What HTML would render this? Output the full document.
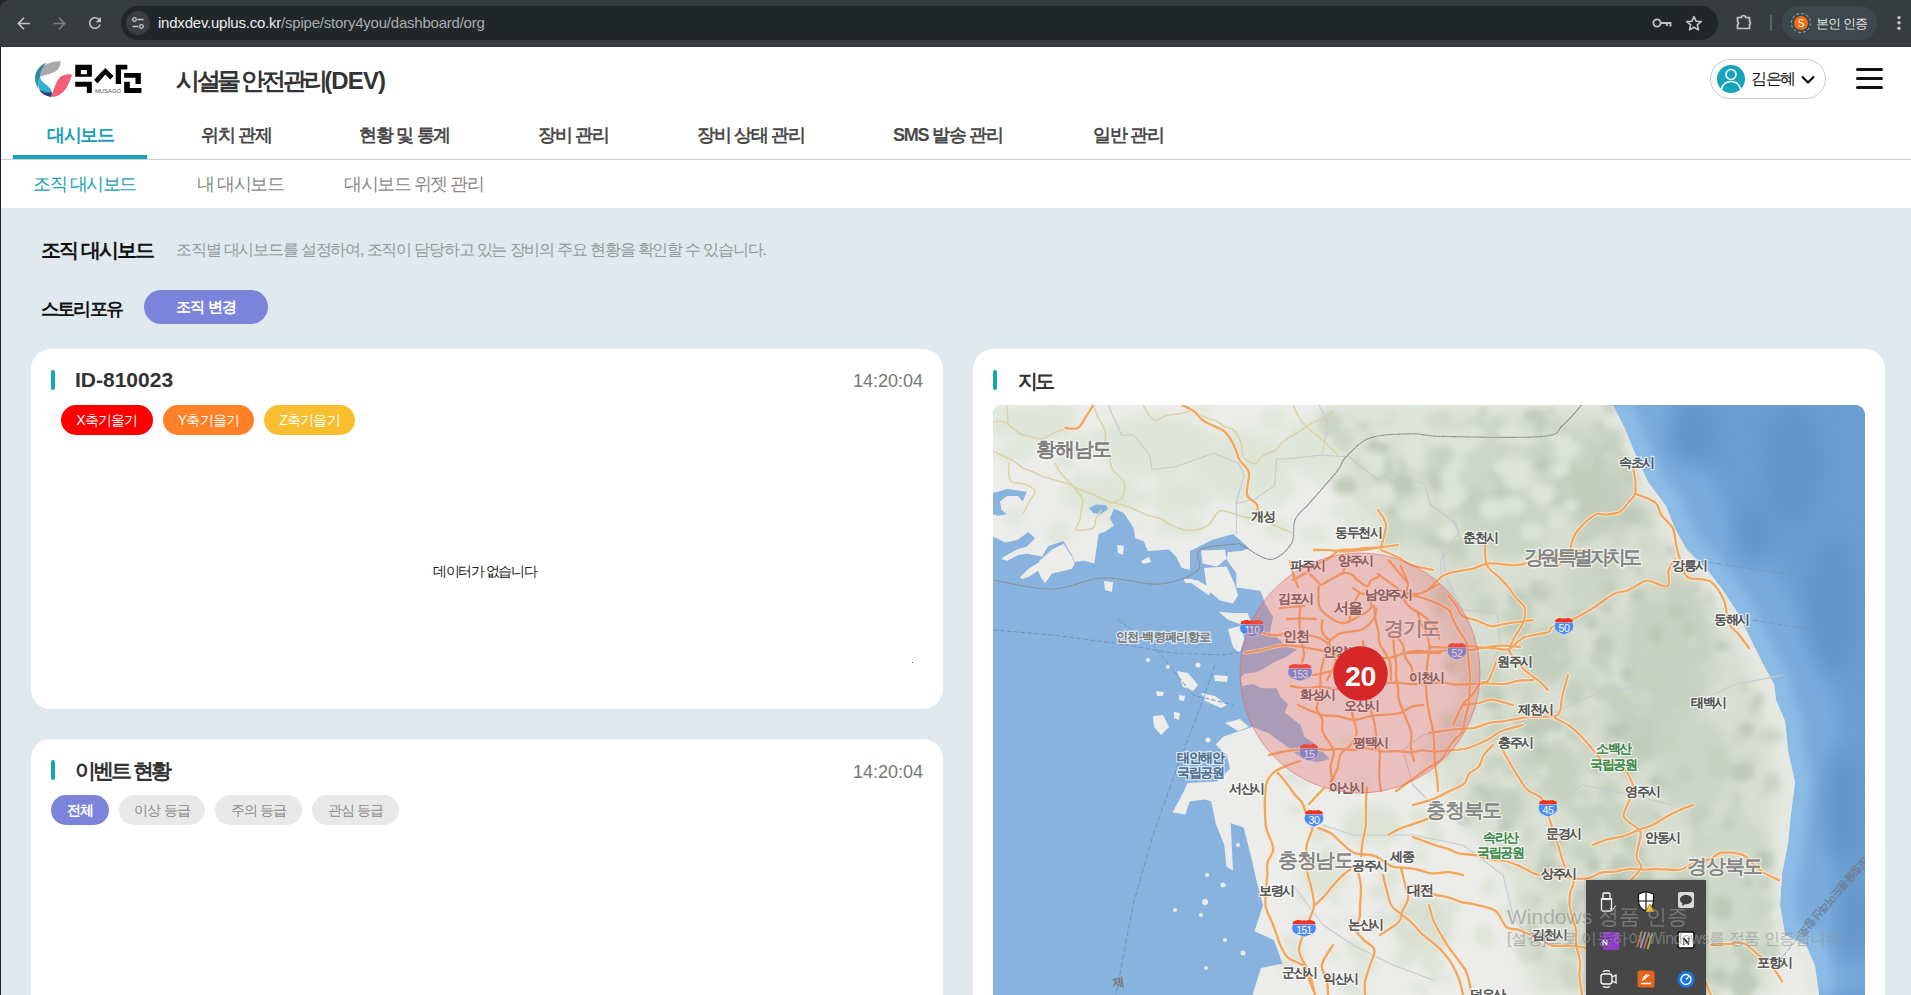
<!DOCTYPE html>
<html lang="ko">
<head>
<meta charset="utf-8">
<title>시설물 안전관리(DEV)</title>
<style>
*{box-sizing:border-box;margin:0;padding:0}
html,body{width:1911px;height:995px;overflow:hidden;background:#fff;font-family:"Liberation Sans",sans-serif;}
.a{position:absolute;white-space:nowrap}
#chrome{position:absolute;left:0;top:0;width:1911px;height:47px;background:#373c3f;border-bottom:1px solid #2e3335}
#omni{position:absolute;left:121px;top:6px;width:1597px;height:34px;border-radius:17px;background:#212628}
#siteinfo{position:absolute;left:126px;top:11px;width:24px;height:24px;border-radius:12px;background:#393e41}
#url{position:absolute;left:158px;top:14px;font-size:15px;color:#a9adb0;letter-spacing:-0.22px}
#prof{position:absolute;left:1782px;top:6px;width:95px;height:34px;border-radius:17px;background:#3c484b}
#leftline{position:absolute;left:0;top:47px;width:1px;height:948px;background:#1c2428}
#content{position:absolute;left:1px;top:208px;width:1910px;height:787px;background:#dfe9ee}
.tab{position:absolute;top:123px;font-size:18px;font-weight:700;color:#4a4a4a;letter-spacing:-1.3px}
.sub{position:absolute;top:172px;font-size:18px;color:#888;letter-spacing:-1.5px}
.card{position:absolute;background:#fff;border-radius:20px}
.bar{position:absolute;width:4px;height:20px;border-radius:2px;background:#14a3b9}
.ctitle{position:absolute;font-size:21px;font-weight:700;color:#333}
.time{position:absolute;font-size:18px;color:#777}
.chip{position:absolute;height:30px;border-radius:15px;color:#fff;font-size:14px;line-height:30px;text-align:center;letter-spacing:-0.8px}
.gchip{position:absolute;height:30px;border-radius:15px;background:#e9e9e9;color:#8a8a8a;font-size:14px;line-height:30px;text-align:center;letter-spacing:-0.8px}
</style>
</head>
<body>
<!-- browser chrome -->
<div id="chrome"></div>
<div class="a" style="left:0;top:0;width:12px;height:12px;background:#222527"></div>
<div class="a" style="left:0;top:0;width:24px;height:24px;background:#373c3f;border-top-left-radius:9px"></div>
<svg class="a" style="left:13.5px;top:13.5px" width="19" height="19" viewBox="0 0 24 24"><path d="M20 11H7.83l5.59-5.59L12 4l-8 8 8 8 1.41-1.41L7.83 13H20v-2z" fill="#c4c7c5"/></svg>
<svg class="a" style="left:49.5px;top:13.5px" width="19" height="19" viewBox="0 0 24 24"><path d="M4 11h12.17l-5.59-5.59L12 4l8 8-8 8-1.41-1.41L16.17 13H4v-2z" fill="#7b7f82"/></svg>
<svg class="a" style="left:86px;top:14px" width="18" height="18" viewBox="0 0 24 24"><path d="M17.65 6.35A7.958 7.958 0 0 0 12 4c-4.42 0-7.99 3.58-7.99 8s3.57 8 7.99 8c3.73 0 6.84-2.55 7.73-6h-2.08A5.99 5.99 0 0 1 12 18c-3.31 0-6-2.69-6-6s2.69-6 6-6c1.66 0 3.14.69 4.22 1.78L13 11h7V4l-2.35 2.35z" fill="#c4c7c5"/></svg>
<div id="omni"></div>
<div id="siteinfo"></div>
<svg class="a" style="left:131px;top:16px" width="14" height="14" viewBox="0 0 14 14"><circle cx="3.5" cy="3.5" r="1.8" stroke="#c4c7c5" stroke-width="1.3" fill="none"/><path d="M6.5 3.5H12.5M1.5 10.5H7.5" stroke="#c4c7c5" stroke-width="1.4"/><circle cx="10.5" cy="10.5" r="1.8" stroke="#c4c7c5" stroke-width="1.3" fill="none"/></svg>
<div id="url"><span style="color:#eceef0">indxdev.uplus.co.kr</span>/spipe/story4you/dashboard/org</div>
<svg class="a" style="left:1652px;top:17px" width="20" height="12" viewBox="0 0 20 12"><circle cx="5" cy="6" r="3.6" stroke="#c4c7c5" stroke-width="1.8" fill="none"/><path d="M8.5 6H18.5V9.5M15 6V9" stroke="#c4c7c5" stroke-width="1.8" fill="none"/></svg>
<svg class="a" style="left:1685px;top:15px" width="18" height="17" viewBox="0 0 18 17"><path d="M9 1.5L11.1 6.2L16.2 6.6L12.3 9.9L13.5 14.9L9 12.2L4.5 14.9L5.7 9.9L1.8 6.6L6.9 6.2Z" stroke="#c4c7c5" stroke-width="1.6" fill="none" stroke-linejoin="round"/></svg>
<svg class="a" style="left:1735px;top:13px" width="20" height="19" viewBox="0 0 20 19"><path d="M2.5 4.5H6.5A2 2 0 0 1 10.5 4.5H14.5V8.5A1.6 1.6 0 0 1 14.5 11.5V15.5H2.5V11.5A1.6 1.6 0 0 0 2.5 8.5Z" stroke="#c4c7c5" stroke-width="1.7" fill="none" stroke-linejoin="round"/></svg>
<div class="a" style="left:1770px;top:15px;width:2px;height:16px;background:#5b6063"></div>
<div id="prof"></div>
<svg class="a" style="left:1790px;top:12px" width="22" height="22" viewBox="0 0 22 22"><circle cx="11" cy="11" r="9.6" stroke="#8a9396" stroke-width="1.1" stroke-dasharray="3 2" fill="none"/><circle cx="11" cy="11" r="7" fill="#f16b12"/><text x="11" y="15" font-size="10" fill="#fff" text-anchor="middle" font-family="Liberation Sans">S</text></svg>
<div class="a" style="left:1816px;top:15px;font-size:13px;color:#e3e3e3;letter-spacing:-0.8px">본인 인증</div>
<svg class="a" style="left:1896px;top:15px" width="6" height="16" viewBox="0 0 6 16"><circle cx="3" cy="2.6" r="1.7" fill="#c4c7c5"/><circle cx="3" cy="7.8" r="1.7" fill="#c4c7c5"/><circle cx="3" cy="13.2" r="1.7" fill="#c4c7c5"/></svg>

<div id="leftline"></div>

<!-- header -->
<svg class="a" style="left:30px;top:56px" width="120" height="44" viewBox="0 0 1911 701">
  <path d="M490 80C380 85 280 110 210 160C175 200 160 260 160 330C230 300 320 290 400 250C460 215 490 150 490 80Z" fill="#a9a9ab"/>
  <path d="M265 105C180 140 110 210 85 300C70 380 90 460 140 530C120 470 120 400 160 330C165 260 185 190 265 105Z" fill="#2a88a4"/>
  <path d="M160 330C115 410 120 500 180 570C230 620 290 645 345 650C350 610 350 570 330 530C300 480 240 450 200 410C170 380 160 350 160 330Z" fill="#2eb0d0"/>
  <path d="M140 530C180 600 250 640 335 655C345 620 348 595 345 575C300 590 220 590 140 530Z" fill="#2c3f7a"/>
  <path d="M345 655C450 650 550 580 600 470C640 390 660 330 670 300C600 280 520 300 470 350C420 400 400 470 380 530C365 570 350 600 345 655Z" fill="#f45c77"/>
  <path fill="#000" fill-rule="evenodd" d="M720 140H985V330H720Z M810 222V290H905V222Z"/>
  <path fill="#000" d="M720 410H985V590H905V490H720Z"/>
  <path fill="#000" d="M1020 380L1200 190L1330 320L1278 375L1200 295L1075 440Z"/>
  <path fill="#000" d="M1365 140H1550V215H1450V445H1365Z"/>
  <path fill="#000" d="M1500 270H1765V445H1680V345H1500Z"/>
  <path fill="#000" d="M1500 410H1590V510H1775V588H1500Z"/>
  <text x="1035" y="588" font-size="92" fill="#555" font-family="Liberation Sans" textLength="415" lengthAdjust="spacingAndGlyphs">MUSAGO</text>
</svg>
<div class="a" style="left:176px;top:65px;font-size:24px;font-weight:700;color:#333;letter-spacing:-3.3px">시설물 안전관리<span style="letter-spacing:-0.9px">(DEV)</span></div>

<div class="a" style="left:1710px;top:59px;width:116px;height:40px;border:1px solid #c9c9c9;border-radius:20px"></div>
<svg class="a" style="left:1717px;top:65px" width="28" height="28" viewBox="0 0 28 28"><circle cx="14" cy="14" r="14" fill="#17a5bd"/><circle cx="14" cy="9.5" r="5" fill="none" stroke="#fff" stroke-width="1.6"/><path d="M4.5 24C6 18.5 9.5 16.5 14 16.5C18.5 16.5 22 18.5 23.5 24" fill="none" stroke="#fff" stroke-width="1.6"/></svg>
<div class="a" style="left:1751px;top:69px;font-size:16px;color:#111;letter-spacing:-1.5px">김은혜</div>
<svg class="a" style="left:1800px;top:74px" width="16" height="11" viewBox="0 0 16 11"><path d="M2 2.5L8 8.5L14 2.5" stroke="#111" stroke-width="2.2" fill="none"/></svg>
<div class="a" style="left:1856px;top:68px;width:27px;height:3px;border-radius:2px;background:#111"></div>
<div class="a" style="left:1856px;top:77px;width:27px;height:3px;border-radius:2px;background:#111"></div>
<div class="a" style="left:1856px;top:86px;width:27px;height:3px;border-radius:2px;background:#111"></div>

<!-- nav -->
<div class="tab" style="left:47px;color:#1ba0b6">대시보드</div>
<div class="tab" style="left:201px">위치 관제</div>
<div class="tab" style="left:359px">현황 및 통계</div>
<div class="tab" style="left:538px">장비 관리</div>
<div class="tab" style="left:697px">장비 상태 관리</div>
<div class="tab" style="left:893px">SMS 발송 관리</div>
<div class="tab" style="left:1093px">일반 관리</div>
<div class="a" style="left:1px;top:159px;width:1910px;height:1px;background:#cfcfcf"></div>
<div class="a" style="left:13px;top:155px;width:134px;height:4px;background:#17a3b8"></div>
<div class="sub" style="left:33px;color:#17a0b6">조직 대시보드</div>
<div class="sub" style="left:197px">내 대시보드</div>
<div class="sub" style="left:344px">대시보드 위젯 관리</div>

<!-- content -->
<div id="content"></div>
<div class="a" style="left:41px;top:237px;font-size:20px;font-weight:700;color:#111;letter-spacing:-1.9px">조직 대시보드</div>
<div class="a" style="left:176px;top:240px;font-size:16px;color:#979797;letter-spacing:-1.2px">조직별 대시보드를 설정하여, 조직이 담당하고 있는 장비의 주요 현황을 확인할 수 있습니다.</div>
<div class="a" style="left:41px;top:297px;font-size:18px;font-weight:700;color:#111;letter-spacing:-1.8px">스토리포유</div>
<div class="a" style="left:144px;top:290px;width:124px;height:34px;border-radius:17px;background:#7b83db;color:#fff;font-size:15px;font-weight:700;line-height:34px;text-align:center;letter-spacing:-1px">조직 변경</div>

<!-- card 1 -->
<div class="card" style="left:31px;top:349px;width:912px;height:360px"></div>
<div class="bar" style="left:51px;top:370px"></div>
<div class="ctitle" style="left:75px;top:368px">ID-810023</div>
<div class="time" style="left:853px;top:371px">14:20:04</div>
<div class="chip" style="left:61px;top:405px;width:92px;background:#ff0000">X축기울기</div>
<div class="chip" style="left:163px;top:405px;width:91px;background:#ff8228">Y축기울기</div>
<div class="chip" style="left:264px;top:405px;width:91px;background:#f7bf30">Z축기울기</div>
<div class="a" style="left:433px;top:563px;font-size:14px;color:#222;letter-spacing:-1.4px">데이터가 없습니다</div>
<div class="a" style="left:912px;top:662px;width:1px;height:1px;background:#666"></div>

<!-- card 2 -->
<div class="card" style="left:31px;top:739px;width:912px;height:300px"></div>
<div class="bar" style="left:51px;top:760px"></div>
<div class="ctitle" style="left:75px;top:757px;letter-spacing:-2.8px">이벤트 현황</div>
<div class="time" style="left:853px;top:762px">14:20:04</div>
<div class="chip" style="left:51px;top:795px;width:58px;background:#7b83db;font-weight:700">전체</div>
<div class="gchip" style="left:119px;top:795px;width:86px">이상 등급</div>
<div class="gchip" style="left:215px;top:795px;width:87px">주의 등급</div>
<div class="gchip" style="left:312px;top:795px;width:87px">관심 등급</div>

<!-- map card -->
<div class="card" style="left:973px;top:349px;width:912px;height:700px"></div>
<div class="bar" style="left:993px;top:370px"></div>
<div class="ctitle" style="left:1018px;top:368px;font-size:20px;letter-spacing:-3px">지도</div>
<div id="map" style="position:absolute;left:993px;top:405px;width:872px;height:600px;border-radius:10px;overflow:hidden;background:#86b0dd">
<svg width="872" height="590" viewBox="0 0 872 590" style="position:absolute;left:0;top:0">
<defs><filter id="bl6" x="-20%" y="-20%" width="140%" height="140%"><feGaussianBlur stdDeviation="6"/></filter><filter id="bl3" x="-20%" y="-20%" width="140%" height="140%"><feGaussianBlur stdDeviation="3"/></filter><filter id="bl10" x="-30%" y="-30%" width="160%" height="160%"><feGaussianBlur stdDeviation="10"/></filter><clipPath id="landclip"><polygon points="0.0,0.0 620.0,0.0 632.0,24.0 640.0,44.0 655.0,77.0 673.0,101.0 682.0,124.0 694.0,145.0 715.0,166.0 729.0,184.0 744.0,207.0 759.0,237.0 771.0,261.0 781.0,279.0 783.0,295.0 792.0,316.0 795.0,346.0 802.0,377.0 798.0,408.0 795.0,438.0 789.0,469.0 787.0,500.0 792.0,530.0 813.0,540.0 822.0,561.0 826.0,590.0 259.4,590.0 268.0,563.0 289.6,558.7 281.0,535.0 261.5,526.3 270.0,500.3 263.7,476.6 259.4,457.0 255.0,439.8 250.7,422.5 237.7,418.2 240.0,465.8 233.4,461.4 231.3,439.8 222.6,418.2 218.3,396.6 211.8,394.4 196.7,396.6 192.4,409.6 179.4,407.4 190.0,388.0 194.5,378.0 224.2,376.5 237.0,363.7 234.0,350.8 222.6,339.5 230.6,331.5 240.0,328.3 250.0,325.0 259.6,322.0 275.7,328.3 298.0,344.4 307.8,352.4 324.0,357.2 336.8,354.0 320.7,338.0 311.0,331.5 307.8,320.2 291.7,307.4 295.0,299.3 287.0,291.3 283.7,283.2 269.0,283.2 259.6,279.0 249.0,281.0 248.0,272.0 251.5,268.8 262.8,267.2 269.0,264.8 280.5,257.5 291.7,252.7 304.6,244.6 291.7,241.4 287.0,235.0 277.0,227.6 280.0,211.5 272.0,198.6 270.6,193.8 267.4,185.8 254.5,184.0 243.3,182.5 243.3,168.0 233.6,154.4 235.0,147.0 248.0,146.0 256.0,143.0 240.0,129.0 219.0,135.0 197.0,146.0 197.0,165.0 188.6,162.7 183.0,151.5 176.0,144.4 154.8,145.9 150.6,136.0 142.2,133.2 140.7,123.3 130.9,107.9 121.0,103.6 116.8,113.5 121.0,120.5 112.6,126.2 105.6,129.0 104.2,138.8 101.3,158.5 91.5,155.7 81.6,157.1 78.8,150.1 70.4,136.0 61.9,138.8 54.9,141.6 49.3,151.5 33.8,148.7 25.3,150.1 14.1,155.7 8.4,154.3 11.3,151.5 23.9,144.4 33.8,141.6 42.2,133.2 35.2,126.9 25.3,134.6 12.7,137.4 0.0,131.8"/></clipPath></defs>
<rect width="872" height="590" fill="#89b3df"/>
<polygon points="620.0,0.0 632.0,24.0 640.0,44.0 655.0,77.0 673.0,101.0 682.0,124.0 694.0,145.0 715.0,166.0 729.0,184.0 744.0,207.0 759.0,237.0 771.0,261.0 781.0,279.0 783.0,295.0 792.0,316.0 795.0,346.0 802.0,377.0 798.0,408.0 795.0,438.0 789.0,469.0 787.0,500.0 792.0,530.0 813.0,540.0 822.0,561.0 826.0,590.0 872.0,590.0 872.0,0.0" fill="#6a9ecf"/>
<polyline points="620.0,0.0 632.0,24.0 640.0,44.0 655.0,77.0 673.0,101.0 682.0,124.0 694.0,145.0 715.0,166.0 729.0,184.0 744.0,207.0 759.0,237.0 771.0,261.0 781.0,279.0 783.0,295.0 792.0,316.0 795.0,346.0 802.0,377.0 798.0,408.0 795.0,438.0 789.0,469.0 787.0,500.0 792.0,530.0 813.0,540.0 822.0,561.0 826.0,590.0" fill="none" stroke="#78aadb" stroke-width="110" filter="url(#bl10)"/>
<polyline points="620.0,0.0 632.0,24.0 640.0,44.0 655.0,77.0 673.0,101.0 682.0,124.0 694.0,145.0 715.0,166.0 729.0,184.0 744.0,207.0 759.0,237.0 771.0,261.0 781.0,279.0 783.0,295.0 792.0,316.0 795.0,346.0 802.0,377.0 798.0,408.0 795.0,438.0 789.0,469.0 787.0,500.0 792.0,530.0 813.0,540.0 822.0,561.0 826.0,590.0" fill="none" stroke="#8cbbe6" stroke-width="34" filter="url(#bl6)"/>
<ellipse cx="800" cy="60" rx="30" ry="60" fill="#6496c9" filter="url(#bl10)"/>
<ellipse cx="840" cy="200" rx="25" ry="70" fill="#6496c9" filter="url(#bl10)"/>
<ellipse cx="850" cy="400" rx="20" ry="60" fill="#6496c9" filter="url(#bl10)"/>
<ellipse cx="700" cy="30" rx="25" ry="30" fill="#6496c9" filter="url(#bl10)"/>
<ellipse cx="860" cy="520" rx="15" ry="40" fill="#6496c9" filter="url(#bl10)"/>
<ellipse cx="760" cy="130" rx="20" ry="30" fill="#6496c9" filter="url(#bl10)"/>
<polygon points="0.0,0.0 620.0,0.0 632.0,24.0 640.0,44.0 655.0,77.0 673.0,101.0 682.0,124.0 694.0,145.0 715.0,166.0 729.0,184.0 744.0,207.0 759.0,237.0 771.0,261.0 781.0,279.0 783.0,295.0 792.0,316.0 795.0,346.0 802.0,377.0 798.0,408.0 795.0,438.0 789.0,469.0 787.0,500.0 792.0,530.0 813.0,540.0 822.0,561.0 826.0,590.0 259.4,590.0 268.0,563.0 289.6,558.7 281.0,535.0 261.5,526.3 270.0,500.3 263.7,476.6 259.4,457.0 255.0,439.8 250.7,422.5 237.7,418.2 240.0,465.8 233.4,461.4 231.3,439.8 222.6,418.2 218.3,396.6 211.8,394.4 196.7,396.6 192.4,409.6 179.4,407.4 190.0,388.0 194.5,378.0 224.2,376.5 237.0,363.7 234.0,350.8 222.6,339.5 230.6,331.5 240.0,328.3 250.0,325.0 259.6,322.0 275.7,328.3 298.0,344.4 307.8,352.4 324.0,357.2 336.8,354.0 320.7,338.0 311.0,331.5 307.8,320.2 291.7,307.4 295.0,299.3 287.0,291.3 283.7,283.2 269.0,283.2 259.6,279.0 249.0,281.0 248.0,272.0 251.5,268.8 262.8,267.2 269.0,264.8 280.5,257.5 291.7,252.7 304.6,244.6 291.7,241.4 287.0,235.0 277.0,227.6 280.0,211.5 272.0,198.6 270.6,193.8 267.4,185.8 254.5,184.0 243.3,182.5 243.3,168.0 233.6,154.4 235.0,147.0 248.0,146.0 256.0,143.0 240.0,129.0 219.0,135.0 197.0,146.0 197.0,165.0 188.6,162.7 183.0,151.5 176.0,144.4 154.8,145.9 150.6,136.0 142.2,133.2 140.7,123.3 130.9,107.9 121.0,103.6 116.8,113.5 121.0,120.5 112.6,126.2 105.6,129.0 104.2,138.8 101.3,158.5 91.5,155.7 81.6,157.1 78.8,150.1 70.4,136.0 61.9,138.8 54.9,141.6 49.3,151.5 33.8,148.7 25.3,150.1 14.1,155.7 8.4,154.3 11.3,151.5 23.9,144.4 33.8,141.6 42.2,133.2 35.2,126.9 25.3,134.6 12.7,137.4 0.0,131.8" fill="#ecedea"/>
<g clip-path="url(#landclip)">
<polygon points="330.0,0.0 620.0,0.0 640.0,60.0 690.0,140.0 760.0,240.0 790.0,380.0 780.0,590.0 540.0,590.0 520.0,470.0 470.0,420.0 430.0,340.0 470.0,290.0 440.0,200.0 390.0,140.0 340.0,70.0" fill="#d8dfd2" filter="url(#bl10)"/>
<polyline points="616.0,0.0 628.0,24.0 636.0,44.0 651.0,77.0 669.0,101.0 678.0,124.0 690.0,145.0 711.0,166.0 725.0,184.0 740.0,207.0 755.0,237.0 767.0,261.0 777.0,279.0 779.0,295.0 788.0,316.0 791.0,346.0 798.0,377.0 794.0,408.0 791.0,438.0 785.0,469.0 783.0,500.0 788.0,530.0 809.0,540.0 818.0,561.0 822.0,590.0" fill="none" stroke="#e4e8e0" stroke-width="16" filter="url(#bl6)"/>
<ellipse cx="40" cy="20" rx="45" ry="18" fill="#dfe6d9" filter="url(#bl6)"/>
<ellipse cx="160" cy="40" rx="60" ry="30" fill="#dfe6d9" filter="url(#bl6)"/>
<ellipse cx="250" cy="60" rx="50" ry="35" fill="#dfe6d9" filter="url(#bl6)"/>
<ellipse cx="330" cy="40" rx="40" ry="30" fill="#dfe6d9" filter="url(#bl6)"/>
<ellipse cx="110" cy="90" rx="40" ry="20" fill="#dfe6d9" filter="url(#bl6)"/>
<ellipse cx="190" cy="90" rx="30" ry="20" fill="#dfe6d9" filter="url(#bl6)"/>
<ellipse cx="605" cy="80" rx="35" ry="50" fill="#c3cebd" filter="url(#bl6)"/>
<ellipse cx="560" cy="40" rx="40" ry="25" fill="#ccd6c6" filter="url(#bl6)"/>
<ellipse cx="470" cy="60" rx="40" ry="35" fill="#cdd7c7" filter="url(#bl6)"/>
<ellipse cx="420" cy="110" rx="30" ry="30" fill="#d2dacc" filter="url(#bl6)"/>
<ellipse cx="520" cy="120" rx="35" ry="35" fill="#cbd5c5" filter="url(#bl6)"/>
<ellipse cx="675" cy="250" rx="45" ry="80" fill="#c8d2c1" filter="url(#bl6)"/>
<ellipse cx="700" cy="360" rx="40" ry="50" fill="#ccd6c6" filter="url(#bl6)"/>
<ellipse cx="555" cy="250" rx="25" ry="30" fill="#c3cebd" filter="url(#bl6)"/>
<ellipse cx="640" cy="330" rx="30" ry="30" fill="#c3cebd" filter="url(#bl6)"/>
<ellipse cx="555" cy="365" rx="35" ry="25" fill="#c8d2c1" filter="url(#bl6)"/>
<ellipse cx="510" cy="400" rx="22" ry="22" fill="#c5d0bf" filter="url(#bl6)"/>
<ellipse cx="740" cy="470" rx="40" ry="60" fill="#cfd8c9" filter="url(#bl6)"/>
<ellipse cx="620" cy="470" rx="40" ry="40" fill="#d6ddcf" filter="url(#bl6)"/>
<ellipse cx="600" cy="180" rx="30" ry="25" fill="#ccd6c6" filter="url(#bl6)"/>
<ellipse cx="470" cy="180" rx="25" ry="25" fill="#d4dcce" filter="url(#bl6)"/>
<ellipse cx="380" cy="420" rx="30" ry="20" fill="#dce3d6" filter="url(#bl6)"/>
<ellipse cx="430" cy="520" rx="30" ry="30" fill="#d8dfd2" filter="url(#bl6)"/>
<ellipse cx="330" cy="470" rx="25" ry="20" fill="#dfe5d9" filter="url(#bl6)"/>
<ellipse cx="700" cy="560" rx="40" ry="30" fill="#d2dacc" filter="url(#bl6)"/>
<ellipse cx="560" cy="530" rx="30" ry="30" fill="#d6ddcf" filter="url(#bl6)"/>
<g filter="url(#bl3)" opacity="0.8"><ellipse cx="526" cy="330" rx="12.3" ry="11.3" fill="#d0d9c9"/><ellipse cx="702" cy="281" rx="9.5" ry="6.3" fill="#cad4c3"/><ellipse cx="452" cy="53" rx="11.3" ry="11.5" fill="#c6d1bf"/><ellipse cx="498" cy="267" rx="10.7" ry="11.0" fill="#cad4c3"/><ellipse cx="600" cy="459" rx="6.9" ry="8.3" fill="#bac6b3"/><ellipse cx="560" cy="378" rx="8.5" ry="7.8" fill="#c6d1bf"/><ellipse cx="654" cy="186" rx="6.1" ry="3.8" fill="#c1ccb9"/><ellipse cx="582" cy="64" rx="5.0" ry="4.3" fill="#c1ccb9"/><ellipse cx="779" cy="500" rx="4.0" ry="5.0" fill="#cad4c3"/><ellipse cx="654" cy="248" rx="9.1" ry="10.4" fill="#cad4c3"/><ellipse cx="435" cy="51" rx="7.0" ry="7.9" fill="#d0d9c9"/><ellipse cx="351" cy="35" rx="11.2" ry="12.0" fill="#cad4c3"/><ellipse cx="510" cy="226" rx="7.6" ry="4.5" fill="#cad4c3"/><ellipse cx="732" cy="575" rx="9.3" ry="7.0" fill="#c6d1bf"/><ellipse cx="621" cy="59" rx="12.9" ry="11.7" fill="#cad4c3"/><ellipse cx="715" cy="228" rx="4.7" ry="4.7" fill="#cad4c3"/><ellipse cx="486" cy="267" rx="12.6" ry="14.9" fill="#d0d9c9"/><ellipse cx="614" cy="183" rx="6.1" ry="4.7" fill="#bac6b3"/><ellipse cx="775" cy="520" rx="9.4" ry="6.0" fill="#d0d9c9"/><ellipse cx="496" cy="248" rx="12.1" ry="9.8" fill="#d0d9c9"/><ellipse cx="580" cy="503" rx="9.5" ry="7.1" fill="#c1ccb9"/><ellipse cx="757" cy="442" rx="4.6" ry="4.2" fill="#d0d9c9"/><ellipse cx="484" cy="338" rx="5.2" ry="3.6" fill="#c1ccb9"/><ellipse cx="525" cy="195" rx="10.6" ry="10.7" fill="#bac6b3"/><ellipse cx="370" cy="21" rx="4.2" ry="4.5" fill="#c1ccb9"/><ellipse cx="618" cy="285" rx="10.6" ry="7.4" fill="#c1ccb9"/><ellipse cx="484" cy="26" rx="12.4" ry="14.4" fill="#cad4c3"/><ellipse cx="643" cy="531" rx="11.8" ry="14.9" fill="#d0d9c9"/><ellipse cx="490" cy="7" rx="4.7" ry="4.9" fill="#c6d1bf"/><ellipse cx="664" cy="229" rx="10.6" ry="9.8" fill="#bac6b3"/><ellipse cx="531" cy="319" rx="8.7" ry="5.4" fill="#bac6b3"/><ellipse cx="601" cy="284" rx="6.1" ry="5.8" fill="#c6d1bf"/><ellipse cx="607" cy="543" rx="6.3" ry="5.4" fill="#c6d1bf"/><ellipse cx="559" cy="445" rx="7.1" ry="6.7" fill="#d0d9c9"/><ellipse cx="702" cy="445" rx="5.8" ry="5.0" fill="#cad4c3"/><ellipse cx="592" cy="187" rx="5.2" ry="4.4" fill="#d0d9c9"/><ellipse cx="536" cy="546" rx="11.5" ry="11.9" fill="#d0d9c9"/><ellipse cx="547" cy="186" rx="11.6" ry="10.6" fill="#bac6b3"/><ellipse cx="337" cy="19" rx="11.9" ry="12.7" fill="#c6d1bf"/><ellipse cx="625" cy="333" rx="9.8" ry="9.0" fill="#d0d9c9"/><ellipse cx="419" cy="83" rx="4.4" ry="4.0" fill="#c6d1bf"/><ellipse cx="615" cy="386" rx="11.3" ry="12.2" fill="#c6d1bf"/><ellipse cx="389" cy="6" rx="8.2" ry="6.0" fill="#c6d1bf"/><ellipse cx="649" cy="307" rx="9.5" ry="8.3" fill="#cad4c3"/><ellipse cx="696" cy="535" rx="4.8" ry="3.3" fill="#d0d9c9"/><ellipse cx="527" cy="369" rx="12.2" ry="12.0" fill="#d0d9c9"/><ellipse cx="626" cy="297" rx="11.4" ry="10.5" fill="#c1ccb9"/><ellipse cx="626" cy="121" rx="10.5" ry="7.9" fill="#c6d1bf"/><ellipse cx="750" cy="578" rx="12.8" ry="16.4" fill="#bac6b3"/><ellipse cx="552" cy="22" rx="7.1" ry="8.1" fill="#d0d9c9"/><ellipse cx="544" cy="17" rx="11.3" ry="10.2" fill="#c6d1bf"/><ellipse cx="643" cy="540" rx="8.2" ry="10.1" fill="#bac6b3"/><ellipse cx="559" cy="400" rx="8.0" ry="8.0" fill="#d0d9c9"/><ellipse cx="645" cy="447" rx="8.0" ry="6.4" fill="#bac6b3"/><ellipse cx="664" cy="377" rx="8.7" ry="6.8" fill="#bac6b3"/><ellipse cx="636" cy="563" rx="11.8" ry="8.8" fill="#bac6b3"/><ellipse cx="725" cy="571" rx="8.7" ry="8.3" fill="#bac6b3"/><ellipse cx="506" cy="67" rx="4.0" ry="2.5" fill="#d0d9c9"/><ellipse cx="581" cy="290" rx="10.2" ry="12.8" fill="#c6d1bf"/><ellipse cx="700" cy="238" rx="6.2" ry="4.3" fill="#d0d9c9"/><ellipse cx="750" cy="281" rx="6.9" ry="6.1" fill="#cad4c3"/><ellipse cx="651" cy="577" rx="4.3" ry="3.3" fill="#cad4c3"/><ellipse cx="644" cy="190" rx="7.2" ry="6.8" fill="#bac6b3"/><ellipse cx="550" cy="344" rx="11.7" ry="9.0" fill="#bac6b3"/><ellipse cx="518" cy="222" rx="7.7" ry="8.0" fill="#bac6b3"/><ellipse cx="569" cy="510" rx="8.8" ry="8.5" fill="#cad4c3"/><ellipse cx="726" cy="361" rx="11.7" ry="14.5" fill="#cad4c3"/><ellipse cx="614" cy="205" rx="5.6" ry="4.6" fill="#bac6b3"/><ellipse cx="663" cy="153" rx="4.9" ry="4.8" fill="#d0d9c9"/><ellipse cx="652" cy="118" rx="9.7" ry="6.4" fill="#c6d1bf"/><ellipse cx="585" cy="211" rx="11.4" ry="7.8" fill="#c1ccb9"/><ellipse cx="553" cy="447" rx="8.5" ry="9.9" fill="#cad4c3"/><ellipse cx="541" cy="14" rx="10.9" ry="10.4" fill="#bac6b3"/><ellipse cx="584" cy="86" rx="5.7" ry="4.1" fill="#cad4c3"/><ellipse cx="636" cy="342" rx="5.2" ry="3.4" fill="#d0d9c9"/><ellipse cx="513" cy="209" rx="5.9" ry="3.6" fill="#c1ccb9"/><ellipse cx="651" cy="498" rx="5.6" ry="4.8" fill="#d0d9c9"/><ellipse cx="602" cy="56" rx="11.1" ry="13.6" fill="#c1ccb9"/><ellipse cx="701" cy="416" rx="11.7" ry="11.7" fill="#d0d9c9"/><ellipse cx="440" cy="69" rx="10.7" ry="12.5" fill="#cad4c3"/><ellipse cx="740" cy="410" rx="10.9" ry="9.6" fill="#cad4c3"/><ellipse cx="471" cy="277" rx="4.1" ry="5.3" fill="#c1ccb9"/><ellipse cx="449" cy="127" rx="7.7" ry="7.4" fill="#cad4c3"/><ellipse cx="621" cy="414" rx="10.9" ry="6.7" fill="#bac6b3"/><ellipse cx="608" cy="436" rx="6.3" ry="6.0" fill="#d0d9c9"/><ellipse cx="681" cy="382" rx="4.1" ry="3.2" fill="#c1ccb9"/><ellipse cx="753" cy="325" rx="8.6" ry="8.5" fill="#bac6b3"/><ellipse cx="599" cy="448" rx="4.4" ry="3.8" fill="#cad4c3"/><ellipse cx="571" cy="352" rx="7.9" ry="7.0" fill="#d0d9c9"/><ellipse cx="563" cy="353" rx="7.3" ry="6.8" fill="#c1ccb9"/><ellipse cx="632" cy="441" rx="4.2" ry="4.3" fill="#cad4c3"/><ellipse cx="616" cy="241" rx="10.2" ry="12.5" fill="#c6d1bf"/><ellipse cx="515" cy="282" rx="12.8" ry="8.1" fill="#cad4c3"/><ellipse cx="509" cy="70" rx="11.8" ry="11.4" fill="#c1ccb9"/><ellipse cx="634" cy="269" rx="6.4" ry="6.9" fill="#bac6b3"/><ellipse cx="445" cy="76" rx="8.3" ry="10.2" fill="#bac6b3"/><ellipse cx="692" cy="369" rx="7.2" ry="7.4" fill="#c1ccb9"/><ellipse cx="663" cy="412" rx="5.7" ry="6.4" fill="#c1ccb9"/><ellipse cx="513" cy="368" rx="4.9" ry="3.9" fill="#bac6b3"/><ellipse cx="678" cy="539" rx="5.4" ry="5.7" fill="#cad4c3"/><ellipse cx="487" cy="282" rx="5.9" ry="5.6" fill="#c1ccb9"/><ellipse cx="701" cy="264" rx="11.4" ry="10.4" fill="#cad4c3"/><ellipse cx="674" cy="230" rx="5.4" ry="5.7" fill="#cad4c3"/><ellipse cx="574" cy="440" rx="12.3" ry="13.0" fill="#d0d9c9"/><ellipse cx="590" cy="273" rx="6.9" ry="4.6" fill="#bac6b3"/><ellipse cx="582" cy="286" rx="10.2" ry="12.0" fill="#c1ccb9"/><ellipse cx="755" cy="356" rx="10.3" ry="11.4" fill="#d0d9c9"/><ellipse cx="647" cy="167" rx="5.3" ry="5.6" fill="#c1ccb9"/><ellipse cx="461" cy="260" rx="9.4" ry="8.5" fill="#c1ccb9"/><ellipse cx="702" cy="180" rx="6.9" ry="8.8" fill="#d0d9c9"/><ellipse cx="665" cy="305" rx="4.8" ry="2.9" fill="#c1ccb9"/><ellipse cx="639" cy="345" rx="11.2" ry="9.6" fill="#bac6b3"/><ellipse cx="495" cy="91" rx="9.3" ry="6.7" fill="#cad4c3"/><ellipse cx="679" cy="520" rx="6.5" ry="4.9" fill="#c6d1bf"/><ellipse cx="448" cy="13" rx="11.6" ry="7.5" fill="#d0d9c9"/><ellipse cx="573" cy="465" rx="4.8" ry="3.8" fill="#c6d1bf"/><ellipse cx="511" cy="420" rx="8.4" ry="7.0" fill="#bac6b3"/><ellipse cx="530" cy="207" rx="11.3" ry="12.1" fill="#c1ccb9"/><ellipse cx="547" cy="317" rx="10.5" ry="13.0" fill="#bac6b3"/><ellipse cx="633" cy="504" rx="11.3" ry="13.8" fill="#c6d1bf"/><ellipse cx="779" cy="378" rx="8.7" ry="10.1" fill="#c6d1bf"/><ellipse cx="511" cy="248" rx="5.3" ry="6.9" fill="#cad4c3"/><ellipse cx="488" cy="99" rx="5.8" ry="5.7" fill="#d0d9c9"/><ellipse cx="536" cy="431" rx="6.7" ry="7.7" fill="#cad4c3"/><ellipse cx="390" cy="37" rx="8.1" ry="7.6" fill="#bac6b3"/><ellipse cx="700" cy="184" rx="5.8" ry="4.3" fill="#c1ccb9"/><ellipse cx="597" cy="132" rx="5.7" ry="5.0" fill="#c1ccb9"/><ellipse cx="755" cy="553" rx="9.6" ry="9.0" fill="#bac6b3"/><ellipse cx="574" cy="565" rx="8.3" ry="7.3" fill="#cad4c3"/><ellipse cx="409" cy="79" rx="11.2" ry="12.9" fill="#bac6b3"/><ellipse cx="687" cy="465" rx="4.5" ry="5.5" fill="#cad4c3"/><ellipse cx="737" cy="534" rx="8.1" ry="8.8" fill="#cad4c3"/><ellipse cx="603" cy="93" rx="5.4" ry="3.8" fill="#c1ccb9"/><ellipse cx="754" cy="478" rx="5.2" ry="4.1" fill="#bac6b3"/><ellipse cx="567" cy="89" rx="10.9" ry="8.1" fill="#c6d1bf"/><ellipse cx="607" cy="311" rx="12.0" ry="7.9" fill="#d0d9c9"/><ellipse cx="674" cy="321" rx="8.6" ry="9.9" fill="#c6d1bf"/><ellipse cx="563" cy="93" rx="11.5" ry="9.4" fill="#c1ccb9"/><ellipse cx="503" cy="328" rx="13.0" ry="11.1" fill="#c6d1bf"/><ellipse cx="497" cy="272" rx="12.7" ry="13.4" fill="#c6d1bf"/><ellipse cx="655" cy="140" rx="9.1" ry="10.4" fill="#d0d9c9"/><ellipse cx="728" cy="498" rx="10.5" ry="7.4" fill="#bac6b3"/><ellipse cx="614" cy="553" rx="10.7" ry="12.1" fill="#c1ccb9"/><ellipse cx="578" cy="51" rx="5.7" ry="6.3" fill="#d0d9c9"/><ellipse cx="581" cy="427" rx="7.0" ry="4.6" fill="#d0d9c9"/><ellipse cx="370" cy="56" rx="10.1" ry="7.3" fill="#cad4c3"/><ellipse cx="596" cy="53" rx="6.0" ry="7.8" fill="#cad4c3"/><ellipse cx="517" cy="455" rx="7.1" ry="8.8" fill="#d0d9c9"/><ellipse cx="541" cy="544" rx="9.6" ry="9.9" fill="#d0d9c9"/><ellipse cx="565" cy="154" rx="5.7" ry="6.0" fill="#c1ccb9"/><ellipse cx="555" cy="465" rx="11.4" ry="12.6" fill="#bac6b3"/><ellipse cx="449" cy="138" rx="9.5" ry="6.6" fill="#bac6b3"/><ellipse cx="657" cy="582" rx="8.6" ry="8.6" fill="#cad4c3"/><ellipse cx="539" cy="246" rx="7.0" ry="8.8" fill="#c6d1bf"/><ellipse cx="481" cy="273" rx="5.1" ry="3.9" fill="#cad4c3"/><ellipse cx="585" cy="322" rx="4.6" ry="3.3" fill="#c1ccb9"/><ellipse cx="673" cy="529" rx="7.0" ry="4.8" fill="#cad4c3"/><ellipse cx="587" cy="490" rx="5.7" ry="6.6" fill="#bac6b3"/><ellipse cx="527" cy="238" rx="11.0" ry="9.0" fill="#cad4c3"/><ellipse cx="636" cy="435" rx="7.4" ry="7.8" fill="#bac6b3"/><ellipse cx="506" cy="20" rx="8.8" ry="8.7" fill="#c6d1bf"/><ellipse cx="466" cy="379" rx="4.3" ry="3.8" fill="#cad4c3"/><ellipse cx="549" cy="60" rx="7.1" ry="8.8" fill="#bac6b3"/><ellipse cx="582" cy="240" rx="6.5" ry="7.8" fill="#d0d9c9"/><ellipse cx="728" cy="241" rx="7.9" ry="5.4" fill="#bac6b3"/><ellipse cx="560" cy="248" rx="4.2" ry="3.4" fill="#c6d1bf"/><ellipse cx="608" cy="256" rx="7.4" ry="8.3" fill="#c1ccb9"/><ellipse cx="452" cy="350" rx="4.6" ry="5.5" fill="#c6d1bf"/><ellipse cx="572" cy="388" rx="12.5" ry="16.2" fill="#c6d1bf"/><ellipse cx="665" cy="514" rx="7.3" ry="6.6" fill="#bac6b3"/><ellipse cx="673" cy="334" rx="12.1" ry="11.7" fill="#c6d1bf"/><ellipse cx="588" cy="267" rx="6.7" ry="4.1" fill="#c1ccb9"/><ellipse cx="525" cy="313" rx="5.3" ry="4.0" fill="#bac6b3"/><ellipse cx="457" cy="191" rx="5.3" ry="6.4" fill="#d0d9c9"/><ellipse cx="618" cy="412" rx="9.0" ry="9.4" fill="#bac6b3"/><ellipse cx="663" cy="185" rx="12.1" ry="13.3" fill="#d0d9c9"/><ellipse cx="398" cy="107" rx="6.1" ry="7.1" fill="#c1ccb9"/><ellipse cx="486" cy="391" rx="12.0" ry="11.5" fill="#bac6b3"/><ellipse cx="390" cy="133" rx="5.2" ry="4.8" fill="#c6d1bf"/><ellipse cx="569" cy="250" rx="9.1" ry="7.3" fill="#cad4c3"/><ellipse cx="678" cy="145" rx="6.5" ry="4.0" fill="#bac6b3"/><ellipse cx="749" cy="367" rx="12.2" ry="10.6" fill="#bac6b3"/><ellipse cx="765" cy="295" rx="5.6" ry="6.4" fill="#bac6b3"/><ellipse cx="542" cy="19" rx="6.6" ry="7.4" fill="#bac6b3"/><ellipse cx="566" cy="350" rx="10.9" ry="11.2" fill="#c6d1bf"/><ellipse cx="687" cy="464" rx="11.1" ry="8.7" fill="#cad4c3"/><ellipse cx="572" cy="503" rx="9.4" ry="5.9" fill="#c1ccb9"/><ellipse cx="598" cy="422" rx="9.2" ry="7.6" fill="#cad4c3"/><ellipse cx="604" cy="359" rx="11.3" ry="10.2" fill="#bac6b3"/><ellipse cx="584" cy="321" rx="11.1" ry="11.5" fill="#cad4c3"/><ellipse cx="648" cy="484" rx="10.6" ry="12.1" fill="#c1ccb9"/><ellipse cx="549" cy="384" rx="8.6" ry="6.7" fill="#d0d9c9"/><ellipse cx="715" cy="464" rx="4.6" ry="4.2" fill="#d0d9c9"/><ellipse cx="649" cy="415" rx="12.6" ry="11.9" fill="#cad4c3"/><ellipse cx="681" cy="582" rx="5.3" ry="5.1" fill="#d0d9c9"/><ellipse cx="505" cy="310" rx="4.8" ry="3.9" fill="#bac6b3"/><ellipse cx="512" cy="45" rx="4.3" ry="3.3" fill="#bac6b3"/><ellipse cx="605" cy="23" rx="7.6" ry="8.5" fill="#c6d1bf"/><ellipse cx="584" cy="538" rx="12.0" ry="11.0" fill="#cad4c3"/><ellipse cx="382" cy="120" rx="5.9" ry="6.7" fill="#d0d9c9"/><ellipse cx="536" cy="289" rx="9.6" ry="11.6" fill="#cad4c3"/><ellipse cx="481" cy="162" rx="4.2" ry="4.7" fill="#cad4c3"/><ellipse cx="556" cy="335" rx="9.8" ry="7.8" fill="#cad4c3"/><ellipse cx="481" cy="91" rx="12.4" ry="8.7" fill="#c1ccb9"/><ellipse cx="719" cy="265" rx="11.7" ry="9.7" fill="#d0d9c9"/><ellipse cx="685" cy="306" rx="4.5" ry="4.6" fill="#d0d9c9"/><ellipse cx="544" cy="111" rx="8.6" ry="5.4" fill="#cad4c3"/><ellipse cx="572" cy="80" rx="10.4" ry="8.5" fill="#c1ccb9"/><ellipse cx="526" cy="222" rx="11.9" ry="11.6" fill="#c1ccb9"/><ellipse cx="525" cy="81" rx="8.7" ry="6.6" fill="#c1ccb9"/><ellipse cx="446" cy="204" rx="5.9" ry="7.1" fill="#c6d1bf"/><ellipse cx="674" cy="285" rx="4.1" ry="4.4" fill="#c1ccb9"/><ellipse cx="579" cy="208" rx="5.1" ry="3.9" fill="#c1ccb9"/><ellipse cx="616" cy="53" rx="7.8" ry="7.4" fill="#d0d9c9"/><ellipse cx="545" cy="549" rx="6.6" ry="5.0" fill="#c1ccb9"/><ellipse cx="684" cy="207" rx="10.4" ry="6.9" fill="#bac6b3"/><ellipse cx="471" cy="249" rx="5.4" ry="4.2" fill="#bac6b3"/><ellipse cx="757" cy="532" rx="5.1" ry="6.3" fill="#c6d1bf"/><ellipse cx="660" cy="523" rx="4.7" ry="3.9" fill="#c6d1bf"/><ellipse cx="746" cy="334" rx="6.4" ry="6.7" fill="#cad4c3"/><ellipse cx="492" cy="201" rx="12.1" ry="12.1" fill="#c6d1bf"/><ellipse cx="771" cy="455" rx="9.6" ry="9.5" fill="#bac6b3"/><ellipse cx="606" cy="38" rx="4.6" ry="5.6" fill="#d0d9c9"/><ellipse cx="554" cy="182" rx="7.2" ry="5.1" fill="#c6d1bf"/><ellipse cx="396" cy="135" rx="10.1" ry="9.8" fill="#cad4c3"/><ellipse cx="763" cy="578" rx="4.0" ry="3.8" fill="#bac6b3"/><ellipse cx="625" cy="323" rx="9.6" ry="11.7" fill="#bac6b3"/><ellipse cx="646" cy="470" rx="6.4" ry="7.8" fill="#c6d1bf"/><ellipse cx="648" cy="405" rx="12.7" ry="9.0" fill="#cad4c3"/><ellipse cx="611" cy="289" rx="9.1" ry="8.1" fill="#c1ccb9"/><ellipse cx="483" cy="394" rx="8.5" ry="7.2" fill="#cad4c3"/><ellipse cx="653" cy="541" rx="10.6" ry="13.7" fill="#c6d1bf"/><ellipse cx="709" cy="523" rx="6.8" ry="6.5" fill="#d0d9c9"/><ellipse cx="611" cy="243" rx="8.3" ry="6.5" fill="#c1ccb9"/><ellipse cx="554" cy="470" rx="7.5" ry="6.5" fill="#c1ccb9"/><ellipse cx="641" cy="108" rx="11.7" ry="13.9" fill="#cad4c3"/><ellipse cx="714" cy="335" rx="7.8" ry="8.1" fill="#cad4c3"/><ellipse cx="716" cy="473" rx="5.1" ry="5.3" fill="#d0d9c9"/><ellipse cx="647" cy="467" rx="12.3" ry="13.4" fill="#c1ccb9"/><ellipse cx="510" cy="373" rx="7.6" ry="4.8" fill="#cad4c3"/><ellipse cx="666" cy="586" rx="5.1" ry="6.3" fill="#c1ccb9"/><ellipse cx="716" cy="505" rx="5.5" ry="4.5" fill="#c6d1bf"/><ellipse cx="700" cy="495" rx="6.6" ry="7.2" fill="#d0d9c9"/><ellipse cx="504" cy="84" rx="9.2" ry="9.0" fill="#cad4c3"/><ellipse cx="388" cy="63" rx="12.4" ry="15.1" fill="#c1ccb9"/><ellipse cx="516" cy="90" rx="12.0" ry="11.9" fill="#c1ccb9"/><ellipse cx="437" cy="134" rx="8.3" ry="8.2" fill="#c1ccb9"/><ellipse cx="579" cy="89" rx="4.1" ry="4.3" fill="#c1ccb9"/><ellipse cx="580" cy="329" rx="5.9" ry="6.3" fill="#bac6b3"/><ellipse cx="612" cy="163" rx="12.4" ry="16.1" fill="#cad4c3"/><ellipse cx="662" cy="104" rx="4.2" ry="4.1" fill="#cad4c3"/><ellipse cx="637" cy="160" rx="4.2" ry="3.4" fill="#bac6b3"/><ellipse cx="557" cy="6" rx="5.9" ry="3.6" fill="#c1ccb9"/><ellipse cx="564" cy="478" rx="11.1" ry="9.8" fill="#d0d9c9"/><ellipse cx="702" cy="488" rx="10.9" ry="13.7" fill="#c6d1bf"/><ellipse cx="541" cy="496" rx="7.7" ry="4.7" fill="#bac6b3"/><ellipse cx="588" cy="134" rx="7.5" ry="7.2" fill="#c1ccb9"/><ellipse cx="613" cy="265" rx="6.8" ry="8.4" fill="#c6d1bf"/><ellipse cx="461" cy="56" rx="7.0" ry="5.2" fill="#cad4c3"/><ellipse cx="672" cy="322" rx="10.1" ry="8.5" fill="#cad4c3"/><ellipse cx="391" cy="13" rx="7.6" ry="6.7" fill="#c6d1bf"/><ellipse cx="461" cy="317" rx="12.6" ry="7.7" fill="#cad4c3"/><ellipse cx="387" cy="39" rx="9.3" ry="12.0" fill="#bac6b3"/><ellipse cx="653" cy="105" rx="6.5" ry="8.2" fill="#d0d9c9"/><ellipse cx="461" cy="108" rx="7.2" ry="5.1" fill="#c6d1bf"/><ellipse cx="617" cy="223" rx="9.8" ry="10.1" fill="#cad4c3"/><ellipse cx="472" cy="259" rx="10.4" ry="9.9" fill="#d0d9c9"/><ellipse cx="584" cy="67" rx="11.5" ry="10.4" fill="#d0d9c9"/><ellipse cx="534" cy="494" rx="8.5" ry="8.7" fill="#d0d9c9"/><ellipse cx="586" cy="304" rx="4.3" ry="3.9" fill="#d0d9c9"/><ellipse cx="597" cy="351" rx="12.4" ry="12.1" fill="#cad4c3"/><ellipse cx="464" cy="151" rx="9.6" ry="10.7" fill="#cad4c3"/><ellipse cx="625" cy="553" rx="11.5" ry="11.0" fill="#c6d1bf"/><ellipse cx="735" cy="420" rx="6.3" ry="5.7" fill="#c1ccb9"/><ellipse cx="568" cy="511" rx="5.8" ry="7.3" fill="#c1ccb9"/><ellipse cx="419" cy="63" rx="8.0" ry="9.7" fill="#d0d9c9"/><ellipse cx="771" cy="479" rx="5.6" ry="3.5" fill="#c1ccb9"/><ellipse cx="725" cy="364" rx="12.1" ry="8.0" fill="#c6d1bf"/><ellipse cx="624" cy="314" rx="6.8" ry="6.8" fill="#cad4c3"/><ellipse cx="708" cy="413" rx="11.6" ry="12.3" fill="#c1ccb9"/><ellipse cx="404" cy="124" rx="10.9" ry="11.8" fill="#cad4c3"/><ellipse cx="533" cy="76" rx="5.0" ry="5.2" fill="#c1ccb9"/><ellipse cx="479" cy="116" rx="13.0" ry="14.4" fill="#cad4c3"/><ellipse cx="480" cy="183" rx="7.7" ry="5.0" fill="#cad4c3"/><ellipse cx="606" cy="165" rx="5.2" ry="6.6" fill="#c6d1bf"/><ellipse cx="473" cy="415" rx="6.1" ry="4.2" fill="#bac6b3"/><ellipse cx="624" cy="133" rx="8.3" ry="9.3" fill="#cad4c3"/><ellipse cx="601" cy="265" rx="4.6" ry="3.8" fill="#d0d9c9"/><ellipse cx="592" cy="389" rx="6.4" ry="6.9" fill="#c6d1bf"/><ellipse cx="725" cy="349" rx="8.9" ry="8.2" fill="#c6d1bf"/><ellipse cx="595" cy="411" rx="12.9" ry="13.8" fill="#c6d1bf"/><ellipse cx="378" cy="43" rx="5.5" ry="4.5" fill="#bac6b3"/><ellipse cx="635" cy="357" rx="12.7" ry="16.5" fill="#c6d1bf"/><ellipse cx="625" cy="414" rx="13.0" ry="16.9" fill="#c6d1bf"/><ellipse cx="628" cy="466" rx="12.4" ry="16.0" fill="#bac6b3"/><ellipse cx="612" cy="438" rx="6.3" ry="7.2" fill="#d0d9c9"/><ellipse cx="772" cy="529" rx="4.2" ry="3.7" fill="#c1ccb9"/><ellipse cx="581" cy="575" rx="11.0" ry="8.9" fill="#c6d1bf"/><ellipse cx="554" cy="74" rx="9.1" ry="9.7" fill="#cad4c3"/><ellipse cx="555" cy="182" rx="7.2" ry="5.5" fill="#cad4c3"/><ellipse cx="507" cy="32" rx="6.0" ry="4.3" fill="#d0d9c9"/><ellipse cx="352" cy="81" rx="12.1" ry="8.6" fill="#bac6b3"/><ellipse cx="503" cy="361" rx="11.8" ry="10.5" fill="#c6d1bf"/><ellipse cx="709" cy="433" rx="10.4" ry="8.4" fill="#cad4c3"/><ellipse cx="609" cy="239" rx="8.4" ry="8.9" fill="#bac6b3"/><ellipse cx="508" cy="46" rx="6.3" ry="6.7" fill="#c6d1bf"/><ellipse cx="580" cy="81" rx="12.8" ry="11.2" fill="#c6d1bf"/><ellipse cx="515" cy="281" rx="7.2" ry="6.0" fill="#d0d9c9"/><ellipse cx="566" cy="96" rx="7.4" ry="6.5" fill="#c1ccb9"/><ellipse cx="411" cy="59" rx="7.3" ry="6.3" fill="#c1ccb9"/><ellipse cx="563" cy="433" rx="7.4" ry="9.4" fill="#bac6b3"/><ellipse cx="599" cy="218" rx="6.7" ry="7.6" fill="#bac6b3"/><ellipse cx="704" cy="557" rx="9.8" ry="8.7" fill="#c1ccb9"/><ellipse cx="716" cy="194" rx="6.9" ry="7.9" fill="#cad4c3"/><ellipse cx="621" cy="33" rx="10.9" ry="9.5" fill="#c6d1bf"/><ellipse cx="608" cy="403" rx="5.9" ry="3.6" fill="#bac6b3"/><ellipse cx="668" cy="247" rx="10.1" ry="7.3" fill="#c6d1bf"/><ellipse cx="639" cy="473" rx="8.0" ry="9.5" fill="#c6d1bf"/><ellipse cx="716" cy="420" rx="10.3" ry="8.4" fill="#d0d9c9"/><ellipse cx="777" cy="331" rx="12.3" ry="8.2" fill="#cad4c3"/><ellipse cx="462" cy="83" rx="12.5" ry="15.2" fill="#cad4c3"/><ellipse cx="536" cy="19" rx="7.9" ry="5.8" fill="#d0d9c9"/><ellipse cx="651" cy="292" rx="7.9" ry="7.6" fill="#d0d9c9"/><ellipse cx="541" cy="324" rx="11.7" ry="9.7" fill="#bac6b3"/><ellipse cx="626" cy="222" rx="11.2" ry="10.3" fill="#d0d9c9"/><ellipse cx="594" cy="273" rx="10.9" ry="10.2" fill="#cad4c3"/><ellipse cx="649" cy="138" rx="6.4" ry="6.4" fill="#d0d9c9"/><ellipse cx="429" cy="38" rx="11.4" ry="8.8" fill="#d0d9c9"/><ellipse cx="507" cy="313" rx="7.5" ry="5.7" fill="#c6d1bf"/><ellipse cx="584" cy="325" rx="7.0" ry="6.4" fill="#cad4c3"/><ellipse cx="451" cy="146" rx="5.4" ry="6.5" fill="#cad4c3"/><ellipse cx="669" cy="203" rx="5.5" ry="5.5" fill="#cad4c3"/><ellipse cx="750" cy="545" rx="10.2" ry="6.9" fill="#c1ccb9"/><ellipse cx="694" cy="476" rx="9.5" ry="6.4" fill="#c1ccb9"/><ellipse cx="479" cy="102" rx="12.0" ry="9.6" fill="#c1ccb9"/><ellipse cx="580" cy="155" rx="4.7" ry="3.7" fill="#c6d1bf"/><ellipse cx="730" cy="504" rx="9.5" ry="11.0" fill="#bac6b3"/><ellipse cx="651" cy="348" rx="9.7" ry="6.2" fill="#c1ccb9"/><ellipse cx="526" cy="219" rx="10.6" ry="8.3" fill="#bac6b3"/><ellipse cx="663" cy="522" rx="4.7" ry="3.2" fill="#bac6b3"/><ellipse cx="770" cy="388" rx="4.6" ry="3.1" fill="#c6d1bf"/><ellipse cx="583" cy="71" rx="12.9" ry="10.9" fill="#c1ccb9"/><ellipse cx="632" cy="83" rx="7.7" ry="9.9" fill="#cad4c3"/><ellipse cx="643" cy="505" rx="11.1" ry="10.8" fill="#bac6b3"/><ellipse cx="518" cy="401" rx="4.8" ry="4.9" fill="#c1ccb9"/><ellipse cx="763" cy="519" rx="4.9" ry="4.6" fill="#cad4c3"/><ellipse cx="579" cy="574" rx="9.1" ry="11.1" fill="#cad4c3"/><ellipse cx="428" cy="129" rx="6.5" ry="8.3" fill="#cad4c3"/><ellipse cx="775" cy="546" rx="11.7" ry="12.0" fill="#c6d1bf"/><ellipse cx="698" cy="588" rx="9.1" ry="7.5" fill="#bac6b3"/><ellipse cx="507" cy="88" rx="5.7" ry="5.5" fill="#bac6b3"/><ellipse cx="590" cy="447" rx="11.3" ry="9.7" fill="#c6d1bf"/><ellipse cx="498" cy="137" rx="7.2" ry="6.0" fill="#cad4c3"/><ellipse cx="563" cy="198" rx="10.1" ry="10.6" fill="#d0d9c9"/><ellipse cx="400" cy="125" rx="8.1" ry="9.3" fill="#cad4c3"/><ellipse cx="466" cy="141" rx="9.9" ry="10.1" fill="#c1ccb9"/><ellipse cx="587" cy="338" rx="4.2" ry="3.2" fill="#c1ccb9"/><ellipse cx="451" cy="194" rx="10.5" ry="12.2" fill="#c6d1bf"/><ellipse cx="570" cy="46" rx="10.9" ry="9.9" fill="#cad4c3"/><ellipse cx="718" cy="590" rx="7.8" ry="6.5" fill="#cad4c3"/><ellipse cx="695" cy="224" rx="6.6" ry="8.3" fill="#bac6b3"/><ellipse cx="512" cy="94" rx="4.6" ry="5.6" fill="#cad4c3"/><ellipse cx="780" cy="550" rx="7.1" ry="4.9" fill="#cad4c3"/><ellipse cx="657" cy="558" rx="5.7" ry="6.3" fill="#cad4c3"/><ellipse cx="743" cy="394" rx="7.3" ry="9.1" fill="#c6d1bf"/><ellipse cx="638" cy="73" rx="6.9" ry="4.7" fill="#bac6b3"/><ellipse cx="563" cy="319" rx="9.1" ry="7.1" fill="#bac6b3"/><ellipse cx="639" cy="110" rx="12.7" ry="8.5" fill="#bac6b3"/><ellipse cx="542" cy="527" rx="9.4" ry="9.6" fill="#c1ccb9"/><ellipse cx="723" cy="274" rx="5.7" ry="7.3" fill="#d0d9c9"/><ellipse cx="500" cy="31" rx="5.5" ry="4.8" fill="#cad4c3"/><ellipse cx="711" cy="567" rx="4.2" ry="4.9" fill="#d0d9c9"/><ellipse cx="550" cy="385" rx="8.2" ry="6.9" fill="#cad4c3"/><ellipse cx="581" cy="406" rx="6.3" ry="4.5" fill="#c1ccb9"/><ellipse cx="606" cy="253" rx="9.3" ry="7.7" fill="#c1ccb9"/><ellipse cx="768" cy="503" rx="11.9" ry="11.1" fill="#cad4c3"/><ellipse cx="581" cy="542" rx="10.9" ry="8.3" fill="#c1ccb9"/><ellipse cx="592" cy="93" rx="12.5" ry="13.1" fill="#c1ccb9"/><ellipse cx="617" cy="2" rx="8.3" ry="7.9" fill="#c6d1bf"/><ellipse cx="761" cy="303" rx="7.4" ry="7.9" fill="#c6d1bf"/><ellipse cx="500" cy="294" rx="11.6" ry="10.7" fill="#bac6b3"/><ellipse cx="289" cy="83" rx="13.7" ry="11.0" fill="#dee6d8"/><ellipse cx="168" cy="58" rx="5.8" ry="4.6" fill="#dee6d8"/><ellipse cx="480" cy="30" rx="12.5" ry="10.0" fill="#dee6d8"/><ellipse cx="479" cy="33" rx="13.1" ry="10.5" fill="#dee6d8"/><ellipse cx="302" cy="55" rx="10.0" ry="8.0" fill="#dee6d8"/><ellipse cx="568" cy="64" rx="9.3" ry="7.5" fill="#dee6d8"/><ellipse cx="174" cy="109" rx="9.5" ry="7.6" fill="#dee6d8"/><ellipse cx="205" cy="26" rx="6.9" ry="5.5" fill="#dee6d8"/><ellipse cx="500" cy="104" rx="13.8" ry="11.0" fill="#dee6d8"/><ellipse cx="550" cy="89" rx="12.2" ry="9.7" fill="#dee6d8"/><ellipse cx="427" cy="105" rx="12.2" ry="9.8" fill="#dee6d8"/><ellipse cx="106" cy="106" rx="7.7" ry="6.2" fill="#dee6d8"/><ellipse cx="146" cy="120" rx="5.2" ry="4.2" fill="#dee6d8"/><ellipse cx="307" cy="45" rx="12.1" ry="9.7" fill="#dee6d8"/><ellipse cx="366" cy="118" rx="13.4" ry="10.7" fill="#dee6d8"/><ellipse cx="387" cy="8" rx="11.0" ry="8.8" fill="#dee6d8"/><ellipse cx="66" cy="128" rx="12.8" ry="10.3" fill="#dee6d8"/><ellipse cx="186" cy="24" rx="11.2" ry="9.0" fill="#dee6d8"/><ellipse cx="455" cy="128" rx="10.6" ry="8.5" fill="#dee6d8"/><ellipse cx="75" cy="94" rx="5.5" ry="4.4" fill="#dee6d8"/><ellipse cx="521" cy="100" rx="12.1" ry="9.7" fill="#dee6d8"/><ellipse cx="524" cy="74" rx="13.5" ry="10.8" fill="#dee6d8"/><ellipse cx="383" cy="64" rx="8.5" ry="6.8" fill="#dee6d8"/><ellipse cx="212" cy="3" rx="6.4" ry="5.2" fill="#dee6d8"/><ellipse cx="477" cy="30" rx="10.9" ry="8.7" fill="#dee6d8"/><ellipse cx="465" cy="90" rx="9.6" ry="7.7" fill="#dee6d8"/><ellipse cx="190" cy="35" rx="6.7" ry="5.3" fill="#dee6d8"/><ellipse cx="389" cy="89" rx="13.5" ry="10.8" fill="#dee6d8"/><ellipse cx="198" cy="121" rx="13.2" ry="10.6" fill="#dee6d8"/><ellipse cx="174" cy="124" rx="10.6" ry="8.5" fill="#dee6d8"/><ellipse cx="578" cy="101" rx="8.0" ry="6.4" fill="#dee6d8"/><ellipse cx="168" cy="68" rx="9.4" ry="7.5" fill="#dee6d8"/><ellipse cx="21" cy="112" rx="9.8" ry="7.9" fill="#dee6d8"/><ellipse cx="284" cy="97" rx="7.2" ry="5.8" fill="#dee6d8"/><ellipse cx="120" cy="76" rx="7.2" ry="5.7" fill="#dee6d8"/><ellipse cx="197" cy="9" rx="5.5" ry="4.4" fill="#dee6d8"/><ellipse cx="213" cy="68" rx="13.5" ry="10.8" fill="#dee6d8"/><ellipse cx="384" cy="54" rx="8.7" ry="6.9" fill="#dee6d8"/><ellipse cx="141" cy="62" rx="13.6" ry="10.9" fill="#dee6d8"/><ellipse cx="73" cy="56" rx="11.2" ry="8.9" fill="#dee6d8"/><ellipse cx="457" cy="72" rx="10.8" ry="8.6" fill="#dee6d8"/><ellipse cx="563" cy="117" rx="7.3" ry="5.8" fill="#dee6d8"/><ellipse cx="325" cy="130" rx="9.7" ry="7.8" fill="#dee6d8"/><ellipse cx="114" cy="100" rx="5.5" ry="4.4" fill="#dee6d8"/><ellipse cx="90" cy="72" rx="7.5" ry="6.0" fill="#dee6d8"/><ellipse cx="432" cy="94" rx="7.9" ry="6.3" fill="#dee6d8"/><ellipse cx="460" cy="84" rx="11.4" ry="9.1" fill="#dee6d8"/><ellipse cx="274" cy="56" rx="6.0" ry="4.8" fill="#dee6d8"/><ellipse cx="285" cy="124" rx="13.0" ry="10.4" fill="#dee6d8"/><ellipse cx="34" cy="9" rx="7.4" ry="5.9" fill="#dee6d8"/><ellipse cx="417" cy="57" rx="6.2" ry="4.9" fill="#dee6d8"/><ellipse cx="255" cy="75" rx="11.7" ry="9.4" fill="#dee6d8"/><ellipse cx="242" cy="84" rx="11.1" ry="8.9" fill="#dee6d8"/><ellipse cx="369" cy="6" rx="11.4" ry="9.1" fill="#dee6d8"/><ellipse cx="77" cy="7" rx="9.3" ry="7.4" fill="#dee6d8"/><ellipse cx="10" cy="9" rx="8.5" ry="6.8" fill="#dee6d8"/><ellipse cx="281" cy="14" rx="13.6" ry="10.9" fill="#dee6d8"/><ellipse cx="511" cy="63" rx="10.3" ry="8.2" fill="#dee6d8"/><ellipse cx="189" cy="128" rx="6.1" ry="4.9" fill="#dee6d8"/><ellipse cx="182" cy="29" rx="12.8" ry="10.2" fill="#dee6d8"/><ellipse cx="305" cy="53" rx="8.6" ry="6.9" fill="#dee6d8"/><ellipse cx="532" cy="33" rx="12.1" ry="9.7" fill="#dee6d8"/><ellipse cx="425" cy="58" rx="8.3" ry="6.6" fill="#dee6d8"/><ellipse cx="262" cy="59" rx="7.8" ry="6.3" fill="#dee6d8"/><ellipse cx="374" cy="53" rx="7.7" ry="6.2" fill="#dee6d8"/><ellipse cx="464" cy="59" rx="9.3" ry="7.4" fill="#dee6d8"/><ellipse cx="528" cy="59" rx="8.4" ry="6.7" fill="#dee6d8"/><ellipse cx="539" cy="127" rx="12.1" ry="9.7" fill="#dee6d8"/><ellipse cx="241" cy="87" rx="11.7" ry="9.3" fill="#dee6d8"/><ellipse cx="178" cy="94" rx="13.5" ry="10.8" fill="#dee6d8"/><ellipse cx="393" cy="87" rx="8.9" ry="7.1" fill="#dee6d8"/><ellipse cx="392" cy="29" rx="11.9" ry="9.5" fill="#dee6d8"/><ellipse cx="323" cy="127" rx="8.1" ry="6.5" fill="#dee6d8"/><ellipse cx="427" cy="2" rx="8.7" ry="7.0" fill="#dee6d8"/><ellipse cx="460" cy="34" rx="10.5" ry="8.4" fill="#dee6d8"/><ellipse cx="133" cy="52" rx="13.9" ry="11.2" fill="#dee6d8"/><ellipse cx="118" cy="119" rx="5.5" ry="4.4" fill="#dee6d8"/><ellipse cx="350" cy="107" rx="12.5" ry="10.0" fill="#dee6d8"/><ellipse cx="235" cy="77" rx="11.4" ry="9.1" fill="#dee6d8"/><ellipse cx="457" cy="97" rx="10.2" ry="8.2" fill="#dee6d8"/><ellipse cx="151" cy="92" rx="10.1" ry="8.0" fill="#dee6d8"/><ellipse cx="327" cy="128" rx="6.2" ry="5.0" fill="#dee6d8"/><ellipse cx="468" cy="42" rx="11.5" ry="9.2" fill="#dee6d8"/><ellipse cx="570" cy="36" rx="10.1" ry="8.1" fill="#dee6d8"/><ellipse cx="317" cy="64" rx="6.5" ry="5.2" fill="#dee6d8"/><ellipse cx="375" cy="116" rx="11.0" ry="8.8" fill="#dee6d8"/><ellipse cx="173" cy="105" rx="8.8" ry="7.0" fill="#dee6d8"/><ellipse cx="87" cy="79" rx="9.1" ry="7.3" fill="#dee6d8"/><ellipse cx="318" cy="129" rx="10.1" ry="8.1" fill="#dee6d8"/><ellipse cx="572" cy="46" rx="11.8" ry="9.5" fill="#dee6d8"/><ellipse cx="45" cy="39" rx="11.2" ry="9.0" fill="#dee6d8"/><ellipse cx="414" cy="108" rx="8.4" ry="6.7" fill="#dee6d8"/><ellipse cx="164" cy="47" rx="9.8" ry="7.9" fill="#dee6d8"/><ellipse cx="14" cy="49" rx="10.9" ry="8.7" fill="#dee6d8"/><ellipse cx="89" cy="40" rx="12.9" ry="10.3" fill="#dee6d8"/><ellipse cx="560" cy="32" rx="6.6" ry="5.3" fill="#dee6d8"/><ellipse cx="71" cy="11" rx="12.1" ry="9.7" fill="#dee6d8"/><ellipse cx="443" cy="34" rx="9.4" ry="7.5" fill="#dee6d8"/><ellipse cx="417" cy="4" rx="12.4" ry="9.9" fill="#dee6d8"/><ellipse cx="516" cy="27" rx="11.3" ry="9.1" fill="#dee6d8"/><ellipse cx="420" cy="44" rx="12.9" ry="10.3" fill="#dee6d8"/><ellipse cx="131" cy="62" rx="7.8" ry="6.3" fill="#dee6d8"/><ellipse cx="265" cy="106" rx="10.1" ry="8.1" fill="#dee6d8"/><ellipse cx="366" cy="128" rx="7.0" ry="5.6" fill="#dee6d8"/><ellipse cx="134" cy="81" rx="6.4" ry="5.1" fill="#dee6d8"/><ellipse cx="579" cy="44" rx="9.0" ry="7.2" fill="#dee6d8"/><ellipse cx="259" cy="108" rx="13.2" ry="10.6" fill="#dee6d8"/><ellipse cx="406" cy="22" rx="8.2" ry="6.6" fill="#dee6d8"/><ellipse cx="424" cy="28" rx="12.9" ry="10.4" fill="#dee6d8"/><ellipse cx="523" cy="29" rx="8.3" ry="6.6" fill="#dee6d8"/><ellipse cx="137" cy="93" rx="5.4" ry="4.3" fill="#dee6d8"/><ellipse cx="417" cy="8" rx="12.6" ry="10.1" fill="#dee6d8"/><ellipse cx="326" cy="76" rx="5.9" ry="4.7" fill="#dee6d8"/><ellipse cx="27" cy="46" rx="13.9" ry="11.1" fill="#dee6d8"/><ellipse cx="360" cy="112" rx="5.6" ry="4.5" fill="#dee6d8"/><ellipse cx="61" cy="3" rx="11.3" ry="9.0" fill="#dee6d8"/><ellipse cx="106" cy="35" rx="11.0" ry="8.8" fill="#dee6d8"/><ellipse cx="417" cy="42" rx="9.2" ry="7.4" fill="#dee6d8"/><ellipse cx="173" cy="73" rx="8.2" ry="6.6" fill="#dee6d8"/><ellipse cx="216" cy="32" rx="7.6" ry="6.1" fill="#dee6d8"/><ellipse cx="360" cy="334" rx="6.5" ry="5.2" fill="#dbe3d5"/><ellipse cx="450" cy="400" rx="4.9" ry="3.9" fill="#dbe3d5"/><ellipse cx="518" cy="452" rx="8.1" ry="6.5" fill="#dbe3d5"/><ellipse cx="374" cy="561" rx="10.0" ry="8.0" fill="#dbe3d5"/><ellipse cx="458" cy="501" rx="9.5" ry="7.6" fill="#dbe3d5"/><ellipse cx="425" cy="437" rx="7.1" ry="5.7" fill="#dbe3d5"/><ellipse cx="426" cy="452" rx="8.2" ry="6.6" fill="#dbe3d5"/><ellipse cx="434" cy="535" rx="11.1" ry="8.9" fill="#dbe3d5"/><ellipse cx="350" cy="336" rx="6.4" ry="5.1" fill="#dbe3d5"/><ellipse cx="299" cy="537" rx="9.0" ry="7.2" fill="#dbe3d5"/><ellipse cx="367" cy="380" rx="10.9" ry="8.8" fill="#dbe3d5"/><ellipse cx="516" cy="508" rx="9.5" ry="7.6" fill="#dbe3d5"/><ellipse cx="491" cy="448" rx="7.2" ry="5.7" fill="#dbe3d5"/><ellipse cx="439" cy="559" rx="11.9" ry="9.5" fill="#dbe3d5"/><ellipse cx="538" cy="547" rx="4.6" ry="3.7" fill="#dbe3d5"/><ellipse cx="357" cy="582" rx="8.3" ry="6.7" fill="#dbe3d5"/><ellipse cx="429" cy="411" rx="10.9" ry="8.7" fill="#dbe3d5"/><ellipse cx="430" cy="587" rx="4.6" ry="3.7" fill="#dbe3d5"/><ellipse cx="558" cy="333" rx="5.2" ry="4.1" fill="#dbe3d5"/><ellipse cx="395" cy="496" rx="4.9" ry="3.9" fill="#dbe3d5"/><ellipse cx="442" cy="574" rx="7.5" ry="6.0" fill="#dbe3d5"/><ellipse cx="496" cy="484" rx="8.7" ry="6.9" fill="#dbe3d5"/><ellipse cx="337" cy="451" rx="11.2" ry="9.0" fill="#dbe3d5"/><ellipse cx="472" cy="386" rx="7.6" ry="6.1" fill="#dbe3d5"/><ellipse cx="437" cy="418" rx="8.6" ry="6.9" fill="#dbe3d5"/><ellipse cx="461" cy="335" rx="5.8" ry="4.6" fill="#dbe3d5"/><ellipse cx="467" cy="386" rx="4.6" ry="3.7" fill="#dbe3d5"/><ellipse cx="496" cy="417" rx="11.7" ry="9.3" fill="#dbe3d5"/><ellipse cx="441" cy="356" rx="9.1" ry="7.3" fill="#dbe3d5"/><ellipse cx="361" cy="542" rx="9.8" ry="7.8" fill="#dbe3d5"/><ellipse cx="495" cy="345" rx="4.3" ry="3.4" fill="#dbe3d5"/><ellipse cx="505" cy="367" rx="5.6" ry="4.5" fill="#dbe3d5"/><ellipse cx="298" cy="373" rx="7.8" ry="6.2" fill="#dbe3d5"/><ellipse cx="549" cy="414" rx="6.1" ry="4.9" fill="#dbe3d5"/><ellipse cx="514" cy="378" rx="9.1" ry="7.3" fill="#dbe3d5"/><ellipse cx="456" cy="573" rx="4.3" ry="3.5" fill="#dbe3d5"/><ellipse cx="442" cy="430" rx="10.6" ry="8.5" fill="#dbe3d5"/><ellipse cx="358" cy="516" rx="5.5" ry="4.4" fill="#dbe3d5"/><ellipse cx="424" cy="582" rx="5.9" ry="4.7" fill="#dbe3d5"/><ellipse cx="365" cy="569" rx="9.4" ry="7.5" fill="#dbe3d5"/><ellipse cx="308" cy="378" rx="5.9" ry="4.7" fill="#dbe3d5"/><ellipse cx="368" cy="550" rx="9.6" ry="7.7" fill="#dbe3d5"/><ellipse cx="555" cy="504" rx="9.0" ry="7.2" fill="#dbe3d5"/><ellipse cx="393" cy="517" rx="7.9" ry="6.4" fill="#dbe3d5"/><ellipse cx="306" cy="458" rx="7.1" ry="5.7" fill="#dbe3d5"/><ellipse cx="433" cy="343" rx="4.2" ry="3.4" fill="#dbe3d5"/><ellipse cx="555" cy="427" rx="6.6" ry="5.3" fill="#dbe3d5"/><ellipse cx="330" cy="484" rx="11.3" ry="9.1" fill="#dbe3d5"/><ellipse cx="339" cy="460" rx="8.0" ry="6.4" fill="#dbe3d5"/><ellipse cx="497" cy="477" rx="5.9" ry="4.7" fill="#dbe3d5"/><ellipse cx="341" cy="518" rx="4.6" ry="3.7" fill="#dbe3d5"/><ellipse cx="523" cy="339" rx="5.5" ry="4.4" fill="#dbe3d5"/><ellipse cx="416" cy="549" rx="9.0" ry="7.2" fill="#dbe3d5"/><ellipse cx="491" cy="528" rx="9.8" ry="7.8" fill="#dbe3d5"/><ellipse cx="304" cy="545" rx="5.2" ry="4.1" fill="#dbe3d5"/><ellipse cx="334" cy="340" rx="4.2" ry="3.4" fill="#dbe3d5"/><ellipse cx="527" cy="429" rx="4.7" ry="3.8" fill="#dbe3d5"/><ellipse cx="303" cy="550" rx="8.8" ry="7.1" fill="#dbe3d5"/><ellipse cx="537" cy="340" rx="4.9" ry="3.9" fill="#dbe3d5"/><ellipse cx="367" cy="380" rx="4.9" ry="3.9" fill="#dbe3d5"/><ellipse cx="344" cy="496" rx="5.3" ry="4.3" fill="#dbe3d5"/><ellipse cx="336" cy="469" rx="7.0" ry="5.6" fill="#dbe3d5"/><ellipse cx="330" cy="478" rx="8.1" ry="6.5" fill="#dbe3d5"/><ellipse cx="395" cy="453" rx="4.3" ry="3.5" fill="#dbe3d5"/><ellipse cx="456" cy="380" rx="6.7" ry="5.3" fill="#dbe3d5"/><ellipse cx="293" cy="561" rx="8.7" ry="7.0" fill="#dbe3d5"/><ellipse cx="396" cy="471" rx="11.5" ry="9.2" fill="#dbe3d5"/><ellipse cx="326" cy="430" rx="9.7" ry="7.7" fill="#dbe3d5"/><ellipse cx="390" cy="514" rx="11.3" ry="9.0" fill="#dbe3d5"/><ellipse cx="301" cy="404" rx="6.3" ry="5.1" fill="#dbe3d5"/><ellipse cx="493" cy="534" rx="9.6" ry="7.7" fill="#dbe3d5"/><ellipse cx="540" cy="378" rx="7.1" ry="5.7" fill="#dbe3d5"/><ellipse cx="520" cy="529" rx="4.9" ry="3.9" fill="#dbe3d5"/><ellipse cx="555" cy="523" rx="10.9" ry="8.7" fill="#dbe3d5"/><ellipse cx="388" cy="487" rx="11.7" ry="9.3" fill="#dbe3d5"/><ellipse cx="532" cy="480" rx="11.1" ry="8.9" fill="#dbe3d5"/><ellipse cx="560" cy="548" rx="9.2" ry="7.4" fill="#dbe3d5"/><ellipse cx="549" cy="367" rx="7.2" ry="5.8" fill="#dbe3d5"/><ellipse cx="442" cy="364" rx="10.2" ry="8.2" fill="#dbe3d5"/><ellipse cx="307" cy="493" rx="6.2" ry="5.0" fill="#dbe3d5"/><ellipse cx="377" cy="488" rx="5.5" ry="4.4" fill="#dbe3d5"/><ellipse cx="411" cy="553" rx="11.9" ry="9.5" fill="#dbe3d5"/><ellipse cx="361" cy="425" rx="9.6" ry="7.6" fill="#dbe3d5"/><ellipse cx="341" cy="551" rx="5.6" ry="4.5" fill="#dbe3d5"/><ellipse cx="440" cy="418" rx="4.0" ry="3.2" fill="#dbe3d5"/><ellipse cx="290" cy="331" rx="6.6" ry="5.3" fill="#dbe3d5"/><ellipse cx="364" cy="588" rx="9.1" ry="7.3" fill="#dbe3d5"/><ellipse cx="308" cy="516" rx="5.9" ry="4.7" fill="#dbe3d5"/><ellipse cx="420" cy="518" rx="10.9" ry="8.7" fill="#dbe3d5"/><ellipse cx="543" cy="439" rx="6.5" ry="5.2" fill="#dbe3d5"/></g>
</g>
<polygon points="46.4,155.7 59.0,144.4 70.4,138.8 78.8,151.5 81.6,158.5 78.8,164.0 59.0,168.4 52.0,178.2 47.9,172.6 45.0,165.6" fill="#ededeb"/>
<polygon points="26.7,172.6 35.2,164.0 46.4,157.0 47.9,164.0 36.6,171.2 29.6,174.0" fill="#ededeb"/>
<polygon points="124.0,140.0 131.0,141.0 130.0,150.0 125.0,148.0" fill="#ededeb"/>
<polygon points="148.0,156.0 156.0,152.0 158.0,157.0 150.0,159.0" fill="#ededeb"/>
<polygon points="111.0,176.0 120.0,177.0 119.0,187.0 112.0,185.0" fill="#ededeb"/>
<polygon points="191.0,174.0 200.0,174.0 199.0,178.0 192.0,178.0" fill="#ededeb"/>
<polygon points="208.0,145.5 232.0,144.7 233.6,153.6 224.0,161.6 209.5,158.4" fill="#ededeb"/>
<polygon points="211.0,163.0 233.6,161.6 241.7,179.0 245.0,190.6 240.0,198.6 227.0,195.4 214.0,184.0" fill="#ededeb"/>
<polygon points="225.6,206.7 240.0,208.0 254.5,208.0 257.8,216.0 248.0,219.5 235.0,214.7" fill="#ededeb"/>
<polygon points="235.0,224.0 248.0,221.0 251.3,234.0 246.5,248.5 240.0,242.0" fill="#ededeb"/>
<polygon points="192.8,174.5 204.7,175.3 219.0,184.0 216.0,190.6 204.7,182.5" fill="#ededeb"/>
<polygon points="184.0,266.0 195.0,268.0 205.0,280.0 200.0,286.0 190.0,282.0" fill="#ededeb"/>
<polygon points="221.0,270.0 235.0,271.0 234.0,277.0 222.0,276.0" fill="#ededeb"/>
<polygon points="208.0,288.0 222.0,291.0 234.0,300.0 228.0,303.0 212.0,296.0" fill="#ededeb"/>
<polygon points="160.0,311.0 170.0,310.0 176.0,322.0 168.0,330.0 161.0,322.0" fill="#ededeb"/>
<polygon points="181.0,307.0 187.0,308.0 186.0,315.0 181.0,313.0" fill="#ededeb"/>
<polygon points="163.0,286.0 171.0,287.0 170.0,291.0 164.0,291.0" fill="#ededeb"/>
<polygon points="186.0,290.0 192.0,291.0 191.0,296.0 186.0,295.0" fill="#ededeb"/>
<polygon points="232.0,318.0 247.0,314.0 256.0,322.0 245.0,326.0" fill="#ededeb"/>
<circle cx="155" cy="255" r="2" fill="#ededeb"/>
<circle cx="175" cy="262" r="2" fill="#ededeb"/>
<circle cx="205" cy="260" r="2.5" fill="#ededeb"/>
<circle cx="215" cy="335" r="2.5" fill="#ededeb"/>
<circle cx="214" cy="470" r="2" fill="#ededeb"/>
<circle cx="212" cy="497" r="3" fill="#ededeb"/>
<circle cx="182" cy="505" r="2" fill="#ededeb"/>
<circle cx="208" cy="510" r="2" fill="#ededeb"/>
<circle cx="232" cy="535" r="2" fill="#ededeb"/>
<circle cx="250" cy="548" r="2.5" fill="#ededeb"/>
<circle cx="213" cy="563" r="2" fill="#ededeb"/>
<circle cx="245" cy="440" r="2" fill="#ededeb"/>
<circle cx="230" cy="480" r="2.5" fill="#ededeb"/>
<polygon points="0.0,88.0 14.0,84.0 34.0,86.7 29.6,96.6 25.0,91.0 14.0,91.0 7.0,96.6 8.4,105.0 14.0,109.0 5.6,110.7 0.0,109.0" fill="#89b3df"/>
<polygon points="96.0,103.0 103.0,99.5 113.0,100.0 115.0,104.0 108.0,109.0 100.0,108.0" fill="#89b3df"/>
<path d="M0.0 17.0 C1.9 17.0 6.9 14.8 11.4 16.7 C15.8 18.7 22.1 26.0 26.5 28.5 C31.0 30.9 34.5 30.6 38.1 31.5 C41.8 32.4 44.7 34.6 48.4 34.0 C52.1 33.5 56.1 30.1 60.3 28.3 C64.6 26.4 71.7 23.9 74.0 23.0 M14.0 0.0 L15.0 18.0 M100.5 0.0 C101.1 1.7 102.3 6.2 104.2 10.4 C106.1 14.6 110.5 20.8 111.9 25.2 C113.3 29.7 111.9 32.8 112.7 37.3 C113.4 41.8 115.4 48.0 116.6 52.5 C117.7 57.0 117.0 60.1 119.5 64.3 C121.9 68.5 129.6 72.8 131.2 77.5 C132.8 82.3 131.3 89.4 128.9 92.9 C126.4 96.4 118.6 97.6 116.6 98.5 M0.0 46.0 C1.8 46.9 7.2 49.5 10.8 51.2 C14.4 53.0 18.6 54.7 21.7 56.6 C24.9 58.6 26.9 61.4 29.7 63.0 C32.5 64.6 35.6 64.8 38.7 66.2 C41.9 67.5 44.6 69.5 48.3 70.9 C52.0 72.3 56.6 73.4 61.0 74.7 C65.3 76.0 70.2 77.1 74.6 78.8 C79.0 80.5 83.0 83.1 87.2 84.8 C91.4 86.6 95.4 87.5 99.8 89.3 C104.3 91.2 109.4 94.5 113.8 96.1 C118.3 97.7 122.4 97.9 126.6 99.1 C130.8 100.3 134.6 101.4 139.2 103.2 C143.9 105.1 149.6 108.6 154.4 110.3 C159.3 112.1 164.6 112.3 168.2 113.8 C171.7 115.3 173.3 117.8 175.9 119.2 C178.6 120.7 181.0 121.5 183.9 122.5 C186.9 123.5 190.4 125.0 193.8 125.3 C197.2 125.7 200.8 125.6 204.4 124.6 C208.1 123.7 212.0 122.8 215.7 119.7 C219.4 116.6 222.6 107.8 226.6 105.9 C230.6 104.1 235.4 107.4 239.5 108.4 C243.6 109.4 247.4 111.1 251.2 112.0 C255.0 112.9 258.6 113.2 262.1 113.9 C265.7 114.6 268.6 114.9 272.5 116.3 C276.3 117.6 280.4 120.0 285.0 122.0 C289.6 123.9 297.5 127.0 300.0 128.0 M16.0 58.0 C16.2 60.9 14.7 72.0 17.4 75.6 C20.1 79.1 28.0 77.5 32.2 79.2 C36.3 81.0 41.5 83.4 42.3 86.1 C43.1 88.8 39.1 91.5 37.1 95.3 C35.1 99.0 31.2 106.4 30.0 108.6 M62.0 58.0 C62.9 59.6 65.2 64.6 67.4 67.6 C69.7 70.6 73.1 73.7 75.4 76.3 C77.7 78.8 78.9 79.9 81.3 82.9 C83.6 85.9 88.4 90.7 89.6 94.2 C90.8 97.8 88.9 100.9 88.4 104.3 C88.0 107.8 87.8 111.4 87.0 114.8 C86.2 118.2 81.3 123.4 83.5 124.8 C85.7 126.1 96.8 124.8 100.0 123.0 C103.2 121.2 101.4 116.9 102.9 113.9 C104.3 110.8 107.6 106.1 108.6 104.6 M191.0 0.0 C192.6 1.1 196.6 4.4 200.5 6.6 C204.4 8.7 210.7 11.5 214.5 13.0 C218.3 14.6 220.6 14.6 223.2 15.9 C225.9 17.3 227.6 19.5 230.5 21.0 C233.4 22.6 237.5 22.5 240.4 25.1 C243.3 27.7 246.0 32.2 247.7 36.6 C249.4 41.0 248.3 47.9 250.6 51.6 C253.0 55.3 258.6 59.0 261.8 58.8 C265.0 58.7 266.4 53.0 269.9 50.7 C273.4 48.5 279.9 47.2 283.0 45.1 C286.0 43.0 285.5 40.6 288.3 38.2 C291.0 35.8 296.0 32.7 299.3 30.6 C302.7 28.4 305.0 27.2 308.3 25.2 C311.5 23.1 314.8 20.3 318.7 18.3 C322.6 16.2 328.1 15.2 331.7 13.0 C335.2 10.8 338.6 6.3 340.0 5.0 M150.0 0.0 C151.8 2.5 156.7 13.5 160.8 15.2 C164.9 16.9 169.9 11.2 174.4 10.1 C178.9 9.0 183.4 9.4 187.7 8.5 C192.0 7.7 197.9 5.6 200.0 5.0 M300.0 0.0 C300.9 1.8 303.3 7.6 305.2 10.9 C307.1 14.2 309.0 17.0 311.5 19.8 C314.0 22.6 317.3 24.9 320.4 27.5 C323.5 30.2 327.2 33.2 330.0 35.7 C332.9 38.2 334.8 40.2 337.3 42.6 C339.8 45.0 343.7 48.8 345.0 50.0" fill="none" stroke="#ddd2a6" stroke-width="1.5"/>
<polyline points="115.6,0.0 118.6,8.0 128.7,30.0 140.8,30.0 156.8,50.0 158.9,64.3 181.0,62.3 221.0,48.3 245.3,58.3 251.3,70.4 243.3,96.5 243.3,128.7" fill="none" stroke="#c8c9cf" stroke-width="1.1" stroke-linejoin="round" stroke-linecap="round" />
<polyline points="299.6,53.3 283.5,54.3 281.5,80.4 261.4,94.5 243.3,98.5" fill="none" stroke="#c8c9cf" stroke-width="1.1" stroke-linejoin="round" stroke-linecap="round" />
<polyline points="299.6,53.3 329.0,50.0 335.0,18.0 326.0,0.0" fill="none" stroke="#c8c9cf" stroke-width="1.1" stroke-linejoin="round" stroke-linecap="round" />
<polyline points="329.0,50.0 356.0,52.0 385.0,75.0 398.0,67.0 432.0,79.0 437.0,99.0 463.0,118.0 466.0,128.0 450.0,147.0 453.0,173.0 470.0,205.0 504.0,208.0 507.0,237.0 489.0,295.0" fill="none" stroke="#c8c9cf" stroke-width="1.1" stroke-linejoin="round" stroke-linecap="round" />
<polyline points="436.0,99.0 462.0,118.0 468.0,136.0 448.0,154.0 448.0,184.0 454.0,196.0" fill="none" stroke="#c8c9cf" stroke-width="1.1" stroke-linejoin="round" stroke-linecap="round" />
<polyline points="489.0,295.0 470.0,320.0 430.0,330.0 410.0,345.0 420.0,380.0 440.0,400.0 470.0,420.0" fill="none" stroke="#c8c9cf" stroke-width="1.1" stroke-linejoin="round" stroke-linecap="round" />
<polyline points="500.0,330.0 540.0,318.0 600.0,290.0 650.0,280.0 700.0,300.0 740.0,280.0 790.0,270.0" fill="none" stroke="#c8c9cf" stroke-width="1.1" stroke-linejoin="round" stroke-linecap="round" />
<polyline points="560.0,400.0 590.0,380.0 640.0,390.0 680.0,400.0" fill="none" stroke="#c8c9cf" stroke-width="1.1" stroke-linejoin="round" stroke-linecap="round" />
<polyline points="330.0,420.0 360.0,430.0 420.0,430.0 470.0,440.0 510.0,470.0 520.0,510.0 540.0,540.0" fill="none" stroke="#c8c9cf" stroke-width="1.1" stroke-linejoin="round" stroke-linecap="round" />
<polyline points="300.0,480.0 330.0,520.0 360.0,540.0 400.0,560.0 440.0,575.0" fill="none" stroke="#c8c9cf" stroke-width="1.1" stroke-linejoin="round" stroke-linecap="round" />
<polyline points="600.0,520.0 640.0,520.0 680.0,515.0 700.0,530.0" fill="none" stroke="#c8c9cf" stroke-width="1.1" stroke-linejoin="round" stroke-linecap="round" />
<path d="M0.0 175.0 C9.8 176.5 40.7 184.3 59.0 184.0 C77.3 183.7 92.2 173.8 110.0 173.0 C127.8 172.2 150.3 180.2 166.0 179.0 C181.7 177.8 197.2 171.7 204.0 166.0 C210.8 160.3 200.5 149.5 207.0 145.0 C213.5 140.5 236.1 139.8 243.0 139.0 C249.9 138.2 242.9 137.4 248.6 140.0 C254.3 142.6 269.1 154.6 277.4 154.4 C285.7 154.2 294.2 145.3 298.3 138.7 C302.4 132.1 299.4 121.3 302.0 115.0 C304.6 108.7 310.2 105.0 314.0 100.7 C317.8 96.4 319.3 95.0 324.5 89.0 C329.7 83.0 340.2 71.2 345.0 65.0 C349.8 58.8 347.7 57.3 353.0 52.0 C358.3 46.7 366.1 36.9 377.0 33.0 C387.9 29.1 406.4 29.1 418.6 28.8 C430.8 28.5 428.2 31.0 450.0 31.4 C471.8 31.8 529.5 33.3 549.5 31.4 C569.5 29.5 563.5 25.2 570.0 20.0 C576.5 14.8 585.6 3.3 588.7 0.0" fill="none" stroke="#8a8a8a" stroke-width="1.1" stroke-linejoin="round" stroke-linecap="round" stroke-dasharray="1.5 1.2"/>
<polyline points="0.0,225.0 60.0,230.0 120.0,238.0 180.0,248.0 230.0,250.0 260.0,245.0" fill="none" stroke="#6f93bf" stroke-width="1.0" stroke-linejoin="round" stroke-linecap="round" stroke-dasharray="4 3"/>
<polyline points="125.0,215.0 160.0,240.0 200.0,290.0 240.0,300.0" fill="none" stroke="#6f93bf" stroke-width="1.0" stroke-linejoin="round" stroke-linecap="round" stroke-dasharray="4 3"/>
<polyline points="222.0,260.0 208.0,300.0 185.0,360.0 160.0,430.0 140.0,500.0 123.0,590.0" fill="none" stroke="#6f93bf" stroke-width="1.0" stroke-linejoin="round" stroke-linecap="round" stroke-dasharray="5 3"/>
<polyline points="700.0,155.0 800.0,170.0 872.0,185.0" fill="none" stroke="#6f93bf" stroke-width="0.8" stroke-linejoin="round" stroke-linecap="round" stroke-dasharray="5 3"/>
<polyline points="760.0,215.0 820.0,225.0 872.0,235.0" fill="none" stroke="#6f93bf" stroke-width="0.8" stroke-linejoin="round" stroke-linecap="round" stroke-dasharray="5 3"/>
<path d="M100.5 0.0 C99.3 1.9 95.8 7.4 93.2 11.2 C90.7 15.1 88.5 20.9 85.0 22.9 C81.6 24.9 74.5 23.0 72.4 23.0 M189.0 0.0 C191.0 1.0 197.5 3.7 201.0 6.2 C204.5 8.8 206.3 12.8 209.9 15.3 C213.4 17.9 218.6 19.8 222.2 21.6 C225.9 23.5 228.5 23.4 231.7 26.6 C234.8 29.7 238.6 35.8 241.1 40.6 C243.5 45.3 244.1 50.5 246.6 55.0 C249.0 59.5 254.6 61.6 255.8 67.4 C257.1 73.1 252.7 84.3 254.1 89.6 C255.4 95.0 262.1 95.9 264.0 99.7 C265.9 103.4 263.4 110.2 265.3 112.1 C267.1 114.0 273.4 111.2 275.0 111.0 M640.0 62.0 C640.4 64.3 641.9 71.2 642.2 75.7 C642.6 80.1 643.1 85.4 642.0 88.9 C640.9 92.4 638.4 93.8 635.9 96.7 C633.4 99.7 630.7 104.6 627.0 106.8 C623.4 108.9 618.2 109.0 614.0 109.6 C609.8 110.1 606.6 107.4 601.7 110.0 C596.8 112.7 588.4 121.0 584.6 125.5 C580.8 130.1 580.5 133.2 579.0 137.1 C577.5 140.9 577.8 144.6 575.7 148.4 C573.5 152.3 567.6 158.1 566.0 160.0 M436.0 184.0 C438.4 181.7 445.0 173.5 450.2 170.5 C455.4 167.4 462.3 166.9 467.2 165.8 C472.1 164.7 475.0 165.0 479.5 163.8 C484.1 162.6 489.6 159.3 494.4 158.5 C499.2 157.8 503.3 158.9 508.4 159.1 C513.5 159.4 520.0 160.4 524.9 160.0 C529.8 159.6 533.4 157.9 537.7 156.7 C542.0 155.4 546.3 153.7 550.7 152.6 C555.2 151.4 559.6 150.8 564.7 149.7 C569.8 148.6 575.6 146.8 581.5 146.0 C587.4 145.2 596.9 145.2 600.0 145.0 M492.0 139.0 C492.3 142.5 491.3 154.4 493.8 160.1 C496.3 165.8 503.3 169.2 507.0 173.1 C510.7 176.9 513.3 179.7 516.0 183.0 C518.7 186.4 520.7 190.0 523.3 193.3 C525.9 196.5 530.4 198.6 531.6 202.6 C532.7 206.7 531.9 212.3 530.1 217.5 C528.3 222.7 523.2 228.8 520.8 233.6 C518.5 238.3 516.8 243.9 516.0 246.0 M643.0 89.0 C646.1 90.4 657.5 93.7 661.8 97.2 C666.0 100.7 665.6 105.9 668.6 110.2 C671.6 114.6 677.4 118.5 679.7 123.1 C682.1 127.6 681.9 133.4 682.8 137.5 C683.6 141.6 683.9 143.8 685.0 147.6 C686.1 151.5 687.8 156.5 689.4 160.6 C691.1 164.7 690.2 169.7 694.9 172.4 C699.5 175.1 711.5 172.8 717.5 176.6 C723.5 180.5 727.8 188.3 730.9 195.2 C733.9 202.2 733.3 212.7 735.8 218.4 C738.3 224.1 742.3 225.3 745.7 229.4 C749.1 233.5 754.3 240.7 756.0 243.0 M436.0 242.0 C437.8 242.0 443.3 242.2 447.1 242.3 C450.9 242.3 454.5 242.3 458.9 242.1 C463.2 241.8 468.6 240.8 473.4 240.8 C478.3 240.9 482.8 241.9 487.7 242.4 C492.5 242.8 498.0 243.0 502.6 243.3 C507.1 243.6 511.2 245.6 515.1 244.3 C519.1 243.0 523.1 237.7 526.5 235.5 C529.8 233.3 530.7 232.3 535.4 231.0 C540.1 229.6 550.8 228.9 554.8 227.4 C558.9 225.8 555.6 223.7 559.9 221.5 C564.1 219.3 573.7 217.2 580.4 214.1 C587.2 211.0 593.6 207.0 600.4 202.8 C607.2 198.6 615.6 191.6 621.1 188.8 C626.5 186.0 629.1 187.5 633.0 186.0 C637.0 184.6 641.0 181.7 644.6 180.0 C648.2 178.3 649.6 175.4 654.6 175.7 C659.6 175.9 671.1 182.9 674.6 181.3 C678.1 179.6 674.3 170.3 675.6 165.8 C676.8 161.2 680.9 156.0 682.0 154.0 M504.0 255.0 C502.5 258.4 497.9 271.8 495.2 275.7 C492.5 279.5 490.7 275.4 487.9 277.9 C485.2 280.4 481.6 287.3 478.6 290.8 C475.6 294.3 473.1 294.2 470.0 299.1 C466.9 304.0 461.7 316.5 460.0 320.0 M516.0 246.0 C517.4 247.9 521.0 253.5 524.2 257.2 C527.4 260.9 531.6 265.2 535.2 268.2 C538.8 271.3 542.5 272.9 545.8 275.7 C549.1 278.5 553.5 283.5 555.0 285.0 M307.0 356.0 C305.2 356.6 300.2 358.1 296.0 359.8 C291.8 361.5 285.7 363.7 282.0 366.4 C278.4 369.1 275.8 371.9 274.2 376.1 C272.5 380.3 272.3 386.3 271.9 391.5 C271.6 396.8 271.8 402.1 272.0 407.5 C272.3 412.9 272.1 418.1 273.5 424.1 C274.8 430.1 280.0 437.9 280.2 443.5 C280.4 449.1 275.5 453.4 274.5 457.7 C273.5 461.9 274.5 464.7 274.3 468.9 C274.1 473.1 273.5 477.5 273.3 482.9 C273.0 488.3 271.8 495.8 272.7 501.4 C273.5 506.9 276.7 511.5 278.5 516.1 C280.4 520.8 282.1 525.2 283.5 529.2 C285.0 533.2 285.3 536.0 287.2 539.9 C289.2 543.8 291.0 548.9 295.1 552.6 C299.1 556.2 307.8 557.8 311.4 561.7 C315.0 565.6 314.7 571.3 316.5 575.8 C318.2 580.4 321.1 586.8 322.0 589.0 M285.0 368.0 C286.3 369.6 290.2 373.9 293.1 377.6 C295.9 381.2 299.5 386.7 302.2 390.0 C304.9 393.4 307.2 394.1 309.1 397.5 C311.1 401.0 312.2 406.7 314.0 410.7 C315.7 414.8 319.6 417.4 319.6 422.0 C319.6 426.7 315.0 433.7 314.0 438.8 C312.9 443.9 312.9 447.6 313.0 452.6 C313.1 457.5 313.6 463.2 314.5 468.4 C315.4 473.6 317.4 478.2 318.5 483.6 C319.6 489.0 321.4 495.9 321.1 500.8 C320.8 505.8 318.2 509.8 316.8 513.4 C315.5 517.1 314.8 517.6 313.0 523.0 C311.2 528.4 305.5 538.2 306.1 545.7 C306.7 553.3 313.9 561.1 316.5 568.4 C319.2 575.8 321.1 586.4 322.0 590.0 M331.0 383.0 L316.0 399.0 M325.0 423.0 C327.1 423.8 333.9 425.9 337.5 428.1 C341.1 430.2 342.6 432.7 346.5 436.0 C350.5 439.3 355.2 445.3 361.0 447.8 C366.9 450.3 375.3 448.7 381.6 450.9 C387.8 453.2 393.8 459.4 398.6 461.3 C403.3 463.3 405.7 462.0 410.0 462.6 C414.3 463.1 419.5 463.5 424.3 464.5 C429.0 465.5 433.2 467.9 438.4 468.3 C443.5 468.8 449.9 466.9 455.2 467.2 C460.5 467.5 467.5 469.5 470.0 470.0 M365.0 466.0 C365.5 468.6 367.6 475.8 367.9 481.5 C368.3 487.1 367.4 494.6 367.1 499.9 C366.9 505.2 367.4 509.6 366.5 513.5 C365.5 517.3 360.9 519.6 361.6 523.2 C362.4 526.8 367.5 531.3 370.8 535.0 C374.1 538.6 380.4 540.5 381.4 545.0 C382.3 549.4 378.0 556.4 376.5 561.8 C374.9 567.1 372.8 572.2 372.0 576.9 C371.3 581.6 372.0 587.8 372.0 590.0 M359.0 463.0 C357.3 464.3 352.3 467.8 349.0 470.9 C345.7 474.0 342.1 478.2 339.2 481.5 C336.4 484.8 334.8 487.5 331.9 490.6 C329.1 493.7 323.7 498.4 322.0 500.0 M408.0 463.0 C408.6 465.4 410.3 472.2 411.5 477.3 C412.7 482.3 415.4 488.6 415.1 493.3 C414.8 498.1 411.3 501.6 409.7 505.6 C408.2 509.5 409.5 513.0 405.8 517.0 C402.0 521.1 390.1 527.8 387.0 530.0 M374.0 383.0 C373.8 385.1 373.2 390.9 373.0 395.5 C372.9 400.0 373.1 405.8 373.0 410.2 C372.9 414.5 373.2 417.1 372.6 421.7 C372.0 426.4 370.2 433.1 369.4 438.0 C368.7 442.9 368.2 448.8 368.0 451.0 M436.0 328.0 C438.8 327.6 447.4 326.3 452.7 325.6 C458.0 324.9 463.1 324.3 467.8 323.8 C472.6 323.4 476.3 323.9 481.2 322.9 C486.2 321.9 492.6 318.8 497.4 317.7 C502.3 316.7 506.1 317.0 510.3 316.4 C514.5 315.8 518.3 314.8 522.6 314.1 C526.9 313.4 531.2 312.4 535.9 312.1 C540.5 311.7 545.3 312.3 550.2 311.8 C555.2 311.3 562.3 312.6 565.5 309.1 C568.7 305.5 567.9 297.0 569.4 290.4 C571.0 283.9 574.1 273.4 575.0 270.0 M506.0 337.0 C507.0 339.0 509.7 344.8 512.0 349.2 C514.4 353.7 517.8 359.6 520.2 363.6 C522.5 367.6 523.6 369.5 526.1 373.0 C528.5 376.6 531.0 381.7 534.7 385.1 C538.5 388.4 545.2 389.6 548.4 393.3 C551.7 396.9 552.5 402.4 554.3 407.0 C556.0 411.7 556.9 415.7 558.7 421.2 C560.5 426.7 562.6 432.9 564.9 439.9 C567.2 446.9 569.9 457.1 572.4 463.2 C575.0 469.2 579.7 472.2 580.5 476.3 C581.2 480.4 577.8 483.9 577.2 487.9 C576.5 491.8 576.3 496.1 576.6 500.0 C576.9 503.9 577.8 507.1 578.9 511.3 C579.9 515.5 582.3 520.7 583.1 525.4 C583.8 530.1 582.6 534.3 583.2 539.5 C583.9 544.7 586.4 551.2 587.0 556.5 C587.5 561.8 586.2 565.7 586.5 571.3 C586.9 576.9 588.6 586.9 589.0 590.0 M420.0 432.0 C421.9 432.7 427.6 434.8 431.5 436.3 C435.4 437.7 439.3 439.3 443.3 440.5 C447.2 441.8 451.4 442.5 455.1 443.8 C458.8 445.1 460.9 447.3 465.5 448.4 C470.0 449.4 476.8 449.1 482.3 450.2 C487.8 451.2 493.4 453.9 498.5 454.9 C503.6 455.9 508.0 454.8 512.9 456.0 C517.8 457.1 523.1 459.6 527.9 461.7 C532.7 463.9 537.3 467.3 541.8 468.8 C546.3 470.3 550.4 470.4 555.0 470.8 C559.7 471.3 565.0 471.1 569.7 471.5 C574.4 472.0 579.0 473.4 583.4 473.7 C587.9 473.9 592.1 473.9 596.2 472.9 C600.3 471.9 603.9 468.6 608.0 467.6 C612.2 466.5 616.7 467.2 621.3 466.6 C626.0 466.0 631.5 464.2 636.1 463.8 C640.7 463.5 644.8 464.6 649.1 464.6 C653.5 464.6 658.0 464.0 662.1 464.0 C666.2 464.0 669.4 464.5 673.7 464.5 C678.0 464.6 683.0 465.7 688.0 464.5 C692.9 463.2 698.5 458.6 703.3 456.9 C708.2 455.2 712.7 455.9 716.9 454.4 C721.1 452.8 723.1 448.3 728.6 447.5 C734.1 446.8 744.5 447.9 749.8 449.9 C755.2 451.9 757.2 456.3 760.8 459.3 C764.3 462.3 766.8 465.2 771.0 467.9 C775.2 470.5 783.5 473.8 786.0 475.0 M562.0 313.0 C564.3 314.2 571.8 317.5 576.0 320.5 C580.2 323.4 583.9 327.0 587.4 330.5 C591.0 334.0 594.0 337.8 597.2 341.5 C600.5 345.3 603.3 350.5 607.1 353.3 C611.0 356.0 616.1 356.1 620.3 358.1 C624.5 360.0 629.0 360.5 632.4 364.9 C635.8 369.3 640.2 379.2 640.8 384.4 C641.5 389.6 637.9 391.4 636.2 395.9 C634.5 400.4 629.9 407.3 630.7 411.4 C631.5 415.6 638.4 418.1 641.2 420.9 C644.0 423.7 647.3 423.2 647.7 428.2 C648.1 433.3 643.4 445.8 643.4 451.5 C643.5 457.2 649.6 458.1 648.2 462.5 C646.8 466.9 637.2 475.4 635.0 478.0 M420.0 480.0 C422.1 480.8 429.0 483.3 432.7 484.9 C436.3 486.5 438.0 488.3 441.9 489.6 C445.8 490.9 451.7 491.4 456.0 492.6 C460.3 493.8 464.0 495.8 467.8 496.8 C471.5 497.9 474.6 498.0 478.5 498.7 C482.3 499.5 486.6 500.2 490.8 501.5 C495.0 502.9 499.7 503.4 503.5 506.8 C507.3 510.2 509.9 519.1 513.6 522.1 C517.3 525.1 521.8 523.5 525.7 524.8 C529.6 526.0 533.3 528.1 537.2 529.8 C541.0 531.5 545.4 533.3 548.9 535.1 C552.4 536.9 554.0 539.5 558.2 540.5 C562.5 541.4 569.3 540.5 574.2 540.8 C579.0 541.0 583.2 541.1 587.5 541.8 C591.9 542.5 597.9 544.5 600.0 545.0 M436.0 500.0 C436.8 502.7 438.8 511.6 440.7 516.4 C442.7 521.2 445.2 524.8 447.5 528.9 C449.9 532.9 451.9 536.5 454.8 540.9 C457.8 545.2 462.1 550.6 465.3 555.1 C468.4 559.6 471.3 561.9 473.6 567.8 C475.9 573.6 478.1 586.3 479.0 590.0 M718.0 540.0 C720.6 539.8 728.3 539.3 733.7 539.1 C739.2 538.8 745.8 536.9 750.8 538.5 C755.7 540.1 759.8 545.6 763.6 548.5 C767.4 551.4 770.5 553.3 773.4 556.0 C776.4 558.8 778.8 561.5 781.4 564.8 C784.0 568.1 787.7 574.1 789.0 576.0 M706.0 561.0 C706.9 563.3 709.6 570.1 711.6 574.9 C713.6 579.8 716.9 587.5 718.0 590.0 M470.0 300.0 C472.7 299.6 481.4 298.8 486.1 297.9 C490.9 297.0 492.9 294.4 498.5 294.7 C504.1 295.1 516.4 299.1 520.0 300.0 M420.0 400.0 C423.4 399.0 434.1 396.4 440.1 394.1 C446.1 391.8 451.0 388.7 456.2 386.2 C461.3 383.7 467.7 381.8 471.0 378.9 C474.3 376.1 473.4 371.9 475.9 369.0 C478.4 366.1 483.3 364.7 485.8 361.5 C488.3 358.3 488.6 353.6 490.9 350.0 C493.3 346.4 498.5 341.7 500.0 340.0 M390.0 470.0 C390.6 472.6 392.3 480.3 393.8 485.4 C395.2 490.6 395.8 496.7 398.7 500.9 C401.5 505.2 407.0 507.8 410.6 510.9 C414.3 514.0 417.2 516.4 420.4 519.5 C423.6 522.7 426.2 526.5 429.7 529.7 C433.2 532.9 437.7 535.5 441.2 538.7 C444.8 541.8 448.3 545.1 451.2 548.5 C454.2 551.9 456.6 554.8 459.1 559.2 C461.6 563.7 464.5 569.9 466.3 575.0 C468.1 580.1 469.4 587.5 470.0 590.0 M340.0 540.0 C338.1 543.3 329.8 554.2 328.8 559.9 C327.8 565.6 332.7 569.1 333.7 574.2 C334.8 579.2 334.8 587.4 335.0 590.0 M395.0 430.0 C396.9 429.0 402.4 425.7 406.4 423.9 C410.4 422.1 414.4 421.1 419.2 419.4 C424.0 417.8 429.9 415.5 435.1 413.9 C440.2 412.3 447.5 410.7 450.0 410.0 M600.0 440.0 C602.3 439.1 608.5 436.1 613.7 434.6 C619.0 433.1 626.2 432.6 631.5 430.9 C636.9 429.3 641.2 426.5 645.7 424.8 C650.3 423.0 654.6 422.5 659.0 420.4 C663.4 418.4 667.5 414.9 672.1 412.4 C676.6 409.8 681.7 407.2 686.3 405.2 C691.0 403.1 697.7 400.9 700.0 400.0 M300.0 175.0 C302.0 173.9 308.3 170.9 312.2 168.3 C316.2 165.7 319.9 161.6 323.7 159.1 C327.6 156.7 331.5 156.0 335.2 153.7 C338.9 151.5 341.7 147.2 345.9 145.6 C350.1 144.1 355.8 145.0 360.5 144.6 C365.2 144.1 369.6 143.2 374.1 142.9 C378.6 142.5 382.3 142.9 387.4 142.4 C392.5 141.9 402.1 140.4 405.0 140.0 M388.0 142.0 C388.8 138.3 393.4 125.8 392.9 119.6 C392.4 113.5 386.3 107.4 385.0 105.0 M297.0 156.0 C297.6 158.4 299.2 165.8 300.5 170.1 C301.9 174.5 304.3 180.0 305.0 182.0 M388.0 145.0 C390.9 146.3 400.3 150.0 405.4 152.6 C410.5 155.1 413.0 158.2 418.7 160.2 C424.5 162.3 436.5 164.2 440.0 165.0 M321.0 145.0 C323.6 145.0 331.7 144.8 336.4 145.1 C341.1 145.3 344.9 146.3 349.4 146.4 C353.8 146.5 358.7 145.9 363.1 145.6 C367.5 145.2 371.5 144.9 375.7 144.3 C379.8 143.7 385.9 142.4 388.0 142.0 M370.0 236.0 C370.2 238.4 370.8 245.8 371.2 250.1 C371.7 254.5 372.1 257.7 372.5 262.2 C372.9 266.8 372.8 272.6 373.6 277.3 C374.4 281.9 376.7 285.3 377.4 290.1 C378.2 294.9 377.4 301.1 378.1 306.0 C378.8 310.8 380.7 314.1 381.7 319.1 C382.6 324.1 383.0 331.0 383.8 335.9 C384.7 340.7 386.3 344.0 386.7 348.2 C387.2 352.3 386.5 356.3 386.4 360.7 C386.3 365.1 386.1 370.5 386.4 374.7 C386.6 379.0 387.7 384.1 388.0 386.0 M337.0 236.0 C336.1 238.5 333.4 245.9 331.9 250.9 C330.3 256.0 328.5 262.0 327.8 266.4 C327.0 270.9 327.6 273.4 327.5 277.6 C327.4 281.7 328.0 286.9 327.4 291.1 C326.7 295.4 323.3 299.1 323.6 303.0 C323.9 307.0 328.3 310.9 329.3 314.9 C330.3 318.9 328.0 322.0 329.8 327.1 C331.7 332.2 339.2 339.7 340.4 345.4 C341.7 351.2 337.8 357.0 337.4 361.4 C337.1 365.9 338.6 368.1 338.5 372.2 C338.4 376.3 337.2 383.7 337.0 386.0 M400.0 230.0 C400.2 232.7 400.8 241.4 401.3 246.2 C401.8 251.1 402.9 255.1 403.2 259.2 C403.5 263.3 402.8 267.0 403.1 270.8 C403.4 274.7 404.5 278.6 405.0 282.6 C405.4 286.6 404.7 290.1 405.9 294.9 C407.1 299.6 409.9 305.6 412.0 311.0 C414.0 316.4 417.1 322.0 418.1 327.2 C419.1 332.3 417.4 337.3 417.9 342.1 C418.4 346.9 420.5 353.7 421.0 356.0 M424.0 206.0 C424.7 208.0 426.5 214.2 428.0 218.0 C429.6 221.7 431.8 224.4 433.3 228.5 C434.7 232.6 436.5 237.8 436.7 242.4 C436.9 247.0 435.0 251.9 434.5 256.2 C434.0 260.4 433.8 263.6 433.6 267.9 C433.3 272.2 433.0 277.2 433.1 281.9 C433.2 286.5 433.5 290.9 434.1 295.8 C434.7 300.7 435.8 306.2 436.8 311.2 C437.7 316.1 439.3 320.9 440.0 325.3 C440.8 329.8 441.0 333.7 441.2 337.7 C441.5 341.7 441.2 345.0 441.4 349.3 C441.6 353.6 442.1 359.2 442.6 363.5 C443.1 367.8 443.9 371.2 444.3 374.9 C444.7 378.7 444.9 384.2 445.0 386.0 M252.0 248.0 C254.8 247.5 263.4 246.1 269.0 244.9 C274.7 243.7 280.8 241.4 285.8 240.7 C290.9 240.0 294.3 240.1 299.5 240.5 C304.7 241.0 311.5 242.4 316.9 243.3 C322.2 244.3 326.5 244.6 331.5 246.1 C336.5 247.5 342.6 250.7 347.0 251.9 C351.5 253.1 354.5 252.4 358.2 253.2 C361.9 254.0 365.2 256.7 369.4 256.7 C373.6 256.8 378.6 254.5 383.4 253.8 C388.3 253.1 393.9 253.3 398.5 252.4 C403.0 251.5 406.4 249.3 410.6 248.2 C414.7 247.2 418.6 246.3 423.3 246.0 C427.9 245.8 433.8 246.8 438.5 246.7 C443.2 246.7 447.8 245.9 451.6 245.6 C455.4 245.2 456.9 244.8 461.4 244.6 C466.0 244.5 473.1 245.4 478.8 244.9 C484.5 244.4 490.3 242.6 495.5 241.9 C500.8 241.2 505.0 240.7 510.2 240.7 C515.5 240.7 524.2 241.8 527.0 242.0 M298.0 281.0 C300.3 281.4 306.9 283.1 311.9 283.2 C316.9 283.3 322.8 281.4 328.0 281.6 C333.1 281.8 337.6 284.1 342.6 284.2 C347.6 284.4 352.9 283.1 357.8 282.6 C362.7 282.0 366.9 281.6 371.9 281.0 C376.8 280.3 382.3 279.0 387.6 278.5 C392.8 277.9 398.4 277.7 403.4 277.7 C408.4 277.8 412.5 278.7 417.6 278.9 C422.8 279.1 429.3 279.2 434.4 278.9 C439.5 278.6 443.7 277.2 448.2 277.3 C452.7 277.4 456.5 279.2 461.6 279.5 C466.7 279.8 473.4 279.2 478.7 279.0 C483.9 278.9 487.6 278.3 493.0 278.3 C498.3 278.3 505.2 279.5 510.5 279.1 C515.8 278.7 519.9 276.6 524.8 275.9 C529.7 275.2 537.5 275.1 540.0 275.0 M276.0 350.0 C278.8 349.4 287.7 347.1 292.9 346.1 C298.1 345.2 302.8 345.1 307.3 344.6 C311.9 344.1 316.1 343.0 320.4 343.1 C324.7 343.1 328.6 344.7 333.2 344.8 C337.8 344.9 343.7 343.8 347.9 343.9 C352.2 343.9 354.4 345.1 358.7 345.0 C363.0 344.9 368.9 342.9 373.9 343.1 C378.8 343.4 383.2 345.8 388.3 346.3 C393.3 346.8 399.3 345.9 404.2 346.1 C409.2 346.2 413.8 347.4 417.9 347.3 C422.1 347.2 425.2 345.6 429.0 345.4 C432.8 345.3 436.9 346.4 441.0 346.4 C445.1 346.4 449.4 345.7 453.6 345.4 C457.7 345.1 461.8 345.1 465.7 344.7 C469.6 344.2 472.0 344.2 476.9 342.5 C481.8 340.9 489.9 337.3 495.1 334.6 C500.2 331.9 501.9 328.9 507.7 326.4 C513.6 324.0 526.3 321.1 530.0 320.0 M385.0 169.0 C387.1 170.5 393.1 175.0 397.7 178.2 C402.3 181.4 407.6 186.2 412.5 188.5 C417.3 190.8 422.0 190.6 426.5 192.0 C431.1 193.3 435.0 194.5 439.8 196.6 C444.7 198.7 452.3 201.9 455.5 204.6 C458.7 207.2 457.5 209.2 459.1 212.5 C460.7 215.8 462.9 220.4 465.2 224.5 C467.6 228.7 471.7 233.6 473.3 237.3 C474.8 241.0 474.1 242.7 474.6 246.6 C475.0 250.4 475.5 256.2 475.9 260.7 C476.3 265.2 476.9 269.9 477.0 273.6 C477.1 277.3 476.8 278.6 476.6 282.9 C476.4 287.2 476.5 294.7 475.8 299.4 C475.1 304.2 473.7 306.8 472.6 311.4 C471.5 315.9 471.3 322.8 469.3 326.8 C467.3 330.8 463.2 332.4 460.7 335.4 C458.2 338.4 456.4 341.5 454.2 344.8 C452.1 348.0 451.0 352.0 447.9 354.9 C444.9 357.9 439.6 359.9 435.9 362.4 C432.3 364.8 429.6 366.9 426.1 369.4 C422.6 372.0 418.8 374.8 414.9 377.5 C411.1 380.3 405.0 384.6 403.0 386.0 M358.0 302.0 C358.4 303.8 359.3 308.8 360.2 313.0 C361.2 317.3 363.9 323.2 363.6 327.6 C363.2 332.0 360.7 335.7 358.1 339.4 C355.5 343.0 350.0 345.3 347.7 349.3 C345.4 353.4 346.1 358.5 344.3 363.6 C342.5 368.7 338.2 377.3 337.0 380.0 M300.0 265.0 C303.2 265.8 312.9 269.5 319.0 269.8 C325.0 270.1 331.1 267.6 336.3 266.6 C341.5 265.6 346.0 263.5 350.2 263.8 C354.4 264.1 357.3 267.3 361.5 268.4 C365.6 269.4 372.7 269.7 375.0 270.0 M305.0 300.0 C307.1 300.9 313.5 304.0 317.9 305.7 C322.2 307.4 326.6 309.4 331.0 310.3 C335.4 311.2 339.1 310.4 344.0 311.1 C349.0 311.9 355.1 314.7 360.7 314.7 C366.4 314.7 372.3 311.9 378.2 311.1 C384.1 310.2 391.1 310.0 396.0 309.5 C400.9 308.9 404.0 309.1 407.8 307.8 C411.5 306.6 414.6 303.1 418.3 301.8 C422.0 300.5 428.1 300.3 430.0 300.0 M455.0 190.0 C456.4 191.9 461.1 197.7 463.5 201.2 C465.9 204.6 465.9 208.2 469.4 210.7 C472.9 213.1 479.8 214.1 484.6 215.8 C489.5 217.6 493.6 220.8 498.6 221.2 C503.6 221.6 510.1 219.1 514.8 218.3 C519.5 217.6 522.5 217.3 526.7 216.8 C530.9 216.2 537.8 215.3 540.0 215.0 M270.0 228.0 C272.2 228.4 278.5 230.7 283.5 230.3 C288.5 230.0 297.2 226.7 300.0 226.0 M314.7 167.0 C316.2 168.4 321.4 173.3 323.6 175.4 C325.9 177.5 325.9 179.7 328.0 179.7 C330.1 179.7 332.6 177.4 336.2 175.5 C339.9 173.6 345.9 169.3 349.7 168.3 C353.4 167.3 356.1 168.3 358.7 169.5 C361.3 170.7 362.5 173.5 365.1 175.5 C367.7 177.5 372.0 181.4 374.1 181.5 C376.2 181.5 375.8 177.3 377.6 175.7 C379.4 174.2 383.8 172.6 385.0 172.0 M325.6 181.5 C325.6 183.7 325.2 191.5 325.4 194.9 C325.5 198.3 325.6 199.7 326.6 201.9 C327.6 204.1 328.5 205.6 331.4 208.1 C334.3 210.5 340.2 215.1 344.0 216.7 C347.7 218.3 350.2 218.4 353.8 217.5 C357.4 216.5 362.5 213.1 365.8 211.3 C369.2 209.5 371.8 208.4 373.9 206.6 C376.0 204.9 378.3 203.6 378.5 200.8 C378.6 198.1 376.5 192.1 374.8 190.0 C373.0 188.0 370.6 189.7 368.1 188.5 C365.6 187.3 361.4 183.9 360.0 183.0 M329.2 215.3 C329.2 217.2 327.9 223.3 329.2 226.5 C330.4 229.7 333.8 234.3 336.7 234.6 C339.6 235.0 342.8 229.9 346.6 228.5 C350.4 227.1 356.0 226.9 359.5 226.3 C363.0 225.7 365.3 225.9 367.8 225.0 C370.3 224.1 372.0 223.1 374.3 221.0 C376.6 218.9 380.1 215.1 381.6 212.2 C383.1 209.2 383.2 204.8 383.5 203.3 M381.0 200.8 C381.3 203.2 381.9 210.9 382.7 215.3 C383.5 219.8 384.9 223.7 385.6 227.6 C386.2 231.6 384.9 234.1 386.7 238.9 C388.6 243.8 394.9 250.7 396.8 256.7 C398.6 262.7 397.8 271.9 398.0 275.0 M407.6 161.0 C408.8 164.0 414.3 173.2 414.9 178.8 C415.5 184.4 410.3 190.2 411.1 194.4 C411.9 198.6 416.3 201.3 419.5 204.1 C422.7 206.8 426.7 207.6 430.5 210.8 C434.4 214.0 440.3 219.5 442.9 223.3 C445.5 227.0 445.6 231.7 446.2 233.4 M404.0 232.2 C404.9 233.4 408.3 236.0 409.6 239.3 C411.0 242.6 410.6 248.3 412.1 252.2 C413.6 256.0 417.4 258.6 418.6 262.4 C419.9 266.2 419.5 272.9 419.7 275.0 M411.2 248.0 C414.2 248.0 423.4 247.7 429.3 247.7 C435.3 247.7 444.1 248.0 447.0 248.0 M311.0 200.8 C309.1 200.9 303.3 201.2 299.3 201.7 C295.3 202.1 289.1 203.0 287.0 203.3 M294.0 214.0 C296.5 213.9 304.4 213.3 309.2 213.3 C314.0 213.3 320.7 213.9 323.0 214.0 M307.5 200.8 C307.3 202.9 306.6 208.9 306.5 213.5 C306.5 218.2 306.5 222.6 307.2 228.5 C308.0 234.4 310.8 244.0 311.0 248.8 C311.2 253.7 309.1 256.1 308.7 257.5 M314.7 229.8 C316.9 230.5 324.1 231.8 328.1 234.0 C332.2 236.2 336.4 239.2 338.8 243.0 C341.2 246.7 343.6 251.2 342.8 256.6 C342.0 261.9 335.5 271.9 334.0 275.0 M412.5 187.6 C414.9 187.7 421.4 189.9 427.0 188.5 C432.7 187.0 443.0 180.6 446.2 179.0 M395.6 155.0 C397.1 156.8 401.7 162.3 404.7 165.9 C407.7 169.5 412.2 174.9 413.7 176.7 M349.7 168.3 C350.0 167.0 351.5 163.4 351.5 160.3 C351.6 157.3 350.3 151.7 350.0 150.0 M366.6 187.6 C365.6 189.7 362.3 195.2 360.6 200.1 C358.8 205.0 356.8 214.2 356.0 217.0" fill="none" stroke="#f9ead4" stroke-width="4.0" stroke-linejoin="round" stroke-linecap="round"/>
<path d="M100.5 0.0 C99.3 1.9 95.8 7.4 93.2 11.2 C90.7 15.1 88.5 20.9 85.0 22.9 C81.6 24.9 74.5 23.0 72.4 23.0 M189.0 0.0 C191.0 1.0 197.5 3.7 201.0 6.2 C204.5 8.8 206.3 12.8 209.9 15.3 C213.4 17.9 218.6 19.8 222.2 21.6 C225.9 23.5 228.5 23.4 231.7 26.6 C234.8 29.7 238.6 35.8 241.1 40.6 C243.5 45.3 244.1 50.5 246.6 55.0 C249.0 59.5 254.6 61.6 255.8 67.4 C257.1 73.1 252.7 84.3 254.1 89.6 C255.4 95.0 262.1 95.9 264.0 99.7 C265.9 103.4 263.4 110.2 265.3 112.1 C267.1 114.0 273.4 111.2 275.0 111.0 M640.0 62.0 C640.4 64.3 641.9 71.2 642.2 75.7 C642.6 80.1 643.1 85.4 642.0 88.9 C640.9 92.4 638.4 93.8 635.9 96.7 C633.4 99.7 630.7 104.6 627.0 106.8 C623.4 108.9 618.2 109.0 614.0 109.6 C609.8 110.1 606.6 107.4 601.7 110.0 C596.8 112.7 588.4 121.0 584.6 125.5 C580.8 130.1 580.5 133.2 579.0 137.1 C577.5 140.9 577.8 144.6 575.7 148.4 C573.5 152.3 567.6 158.1 566.0 160.0 M436.0 184.0 C438.4 181.7 445.0 173.5 450.2 170.5 C455.4 167.4 462.3 166.9 467.2 165.8 C472.1 164.7 475.0 165.0 479.5 163.8 C484.1 162.6 489.6 159.3 494.4 158.5 C499.2 157.8 503.3 158.9 508.4 159.1 C513.5 159.4 520.0 160.4 524.9 160.0 C529.8 159.6 533.4 157.9 537.7 156.7 C542.0 155.4 546.3 153.7 550.7 152.6 C555.2 151.4 559.6 150.8 564.7 149.7 C569.8 148.6 575.6 146.8 581.5 146.0 C587.4 145.2 596.9 145.2 600.0 145.0 M492.0 139.0 C492.3 142.5 491.3 154.4 493.8 160.1 C496.3 165.8 503.3 169.2 507.0 173.1 C510.7 176.9 513.3 179.7 516.0 183.0 C518.7 186.4 520.7 190.0 523.3 193.3 C525.9 196.5 530.4 198.6 531.6 202.6 C532.7 206.7 531.9 212.3 530.1 217.5 C528.3 222.7 523.2 228.8 520.8 233.6 C518.5 238.3 516.8 243.9 516.0 246.0 M643.0 89.0 C646.1 90.4 657.5 93.7 661.8 97.2 C666.0 100.7 665.6 105.9 668.6 110.2 C671.6 114.6 677.4 118.5 679.7 123.1 C682.1 127.6 681.9 133.4 682.8 137.5 C683.6 141.6 683.9 143.8 685.0 147.6 C686.1 151.5 687.8 156.5 689.4 160.6 C691.1 164.7 690.2 169.7 694.9 172.4 C699.5 175.1 711.5 172.8 717.5 176.6 C723.5 180.5 727.8 188.3 730.9 195.2 C733.9 202.2 733.3 212.7 735.8 218.4 C738.3 224.1 742.3 225.3 745.7 229.4 C749.1 233.5 754.3 240.7 756.0 243.0 M436.0 242.0 C437.8 242.0 443.3 242.2 447.1 242.3 C450.9 242.3 454.5 242.3 458.9 242.1 C463.2 241.8 468.6 240.8 473.4 240.8 C478.3 240.9 482.8 241.9 487.7 242.4 C492.5 242.8 498.0 243.0 502.6 243.3 C507.1 243.6 511.2 245.6 515.1 244.3 C519.1 243.0 523.1 237.7 526.5 235.5 C529.8 233.3 530.7 232.3 535.4 231.0 C540.1 229.6 550.8 228.9 554.8 227.4 C558.9 225.8 555.6 223.7 559.9 221.5 C564.1 219.3 573.7 217.2 580.4 214.1 C587.2 211.0 593.6 207.0 600.4 202.8 C607.2 198.6 615.6 191.6 621.1 188.8 C626.5 186.0 629.1 187.5 633.0 186.0 C637.0 184.6 641.0 181.7 644.6 180.0 C648.2 178.3 649.6 175.4 654.6 175.7 C659.6 175.9 671.1 182.9 674.6 181.3 C678.1 179.6 674.3 170.3 675.6 165.8 C676.8 161.2 680.9 156.0 682.0 154.0 M504.0 255.0 C502.5 258.4 497.9 271.8 495.2 275.7 C492.5 279.5 490.7 275.4 487.9 277.9 C485.2 280.4 481.6 287.3 478.6 290.8 C475.6 294.3 473.1 294.2 470.0 299.1 C466.9 304.0 461.7 316.5 460.0 320.0 M516.0 246.0 C517.4 247.9 521.0 253.5 524.2 257.2 C527.4 260.9 531.6 265.2 535.2 268.2 C538.8 271.3 542.5 272.9 545.8 275.7 C549.1 278.5 553.5 283.5 555.0 285.0 M307.0 356.0 C305.2 356.6 300.2 358.1 296.0 359.8 C291.8 361.5 285.7 363.7 282.0 366.4 C278.4 369.1 275.8 371.9 274.2 376.1 C272.5 380.3 272.3 386.3 271.9 391.5 C271.6 396.8 271.8 402.1 272.0 407.5 C272.3 412.9 272.1 418.1 273.5 424.1 C274.8 430.1 280.0 437.9 280.2 443.5 C280.4 449.1 275.5 453.4 274.5 457.7 C273.5 461.9 274.5 464.7 274.3 468.9 C274.1 473.1 273.5 477.5 273.3 482.9 C273.0 488.3 271.8 495.8 272.7 501.4 C273.5 506.9 276.7 511.5 278.5 516.1 C280.4 520.8 282.1 525.2 283.5 529.2 C285.0 533.2 285.3 536.0 287.2 539.9 C289.2 543.8 291.0 548.9 295.1 552.6 C299.1 556.2 307.8 557.8 311.4 561.7 C315.0 565.6 314.7 571.3 316.5 575.8 C318.2 580.4 321.1 586.8 322.0 589.0 M285.0 368.0 C286.3 369.6 290.2 373.9 293.1 377.6 C295.9 381.2 299.5 386.7 302.2 390.0 C304.9 393.4 307.2 394.1 309.1 397.5 C311.1 401.0 312.2 406.7 314.0 410.7 C315.7 414.8 319.6 417.4 319.6 422.0 C319.6 426.7 315.0 433.7 314.0 438.8 C312.9 443.9 312.9 447.6 313.0 452.6 C313.1 457.5 313.6 463.2 314.5 468.4 C315.4 473.6 317.4 478.2 318.5 483.6 C319.6 489.0 321.4 495.9 321.1 500.8 C320.8 505.8 318.2 509.8 316.8 513.4 C315.5 517.1 314.8 517.6 313.0 523.0 C311.2 528.4 305.5 538.2 306.1 545.7 C306.7 553.3 313.9 561.1 316.5 568.4 C319.2 575.8 321.1 586.4 322.0 590.0 M331.0 383.0 L316.0 399.0 M325.0 423.0 C327.1 423.8 333.9 425.9 337.5 428.1 C341.1 430.2 342.6 432.7 346.5 436.0 C350.5 439.3 355.2 445.3 361.0 447.8 C366.9 450.3 375.3 448.7 381.6 450.9 C387.8 453.2 393.8 459.4 398.6 461.3 C403.3 463.3 405.7 462.0 410.0 462.6 C414.3 463.1 419.5 463.5 424.3 464.5 C429.0 465.5 433.2 467.9 438.4 468.3 C443.5 468.8 449.9 466.9 455.2 467.2 C460.5 467.5 467.5 469.5 470.0 470.0 M365.0 466.0 C365.5 468.6 367.6 475.8 367.9 481.5 C368.3 487.1 367.4 494.6 367.1 499.9 C366.9 505.2 367.4 509.6 366.5 513.5 C365.5 517.3 360.9 519.6 361.6 523.2 C362.4 526.8 367.5 531.3 370.8 535.0 C374.1 538.6 380.4 540.5 381.4 545.0 C382.3 549.4 378.0 556.4 376.5 561.8 C374.9 567.1 372.8 572.2 372.0 576.9 C371.3 581.6 372.0 587.8 372.0 590.0 M359.0 463.0 C357.3 464.3 352.3 467.8 349.0 470.9 C345.7 474.0 342.1 478.2 339.2 481.5 C336.4 484.8 334.8 487.5 331.9 490.6 C329.1 493.7 323.7 498.4 322.0 500.0 M408.0 463.0 C408.6 465.4 410.3 472.2 411.5 477.3 C412.7 482.3 415.4 488.6 415.1 493.3 C414.8 498.1 411.3 501.6 409.7 505.6 C408.2 509.5 409.5 513.0 405.8 517.0 C402.0 521.1 390.1 527.8 387.0 530.0 M374.0 383.0 C373.8 385.1 373.2 390.9 373.0 395.5 C372.9 400.0 373.1 405.8 373.0 410.2 C372.9 414.5 373.2 417.1 372.6 421.7 C372.0 426.4 370.2 433.1 369.4 438.0 C368.7 442.9 368.2 448.8 368.0 451.0 M436.0 328.0 C438.8 327.6 447.4 326.3 452.7 325.6 C458.0 324.9 463.1 324.3 467.8 323.8 C472.6 323.4 476.3 323.9 481.2 322.9 C486.2 321.9 492.6 318.8 497.4 317.7 C502.3 316.7 506.1 317.0 510.3 316.4 C514.5 315.8 518.3 314.8 522.6 314.1 C526.9 313.4 531.2 312.4 535.9 312.1 C540.5 311.7 545.3 312.3 550.2 311.8 C555.2 311.3 562.3 312.6 565.5 309.1 C568.7 305.5 567.9 297.0 569.4 290.4 C571.0 283.9 574.1 273.4 575.0 270.0 M506.0 337.0 C507.0 339.0 509.7 344.8 512.0 349.2 C514.4 353.7 517.8 359.6 520.2 363.6 C522.5 367.6 523.6 369.5 526.1 373.0 C528.5 376.6 531.0 381.7 534.7 385.1 C538.5 388.4 545.2 389.6 548.4 393.3 C551.7 396.9 552.5 402.4 554.3 407.0 C556.0 411.7 556.9 415.7 558.7 421.2 C560.5 426.7 562.6 432.9 564.9 439.9 C567.2 446.9 569.9 457.1 572.4 463.2 C575.0 469.2 579.7 472.2 580.5 476.3 C581.2 480.4 577.8 483.9 577.2 487.9 C576.5 491.8 576.3 496.1 576.6 500.0 C576.9 503.9 577.8 507.1 578.9 511.3 C579.9 515.5 582.3 520.7 583.1 525.4 C583.8 530.1 582.6 534.3 583.2 539.5 C583.9 544.7 586.4 551.2 587.0 556.5 C587.5 561.8 586.2 565.7 586.5 571.3 C586.9 576.9 588.6 586.9 589.0 590.0 M420.0 432.0 C421.9 432.7 427.6 434.8 431.5 436.3 C435.4 437.7 439.3 439.3 443.3 440.5 C447.2 441.8 451.4 442.5 455.1 443.8 C458.8 445.1 460.9 447.3 465.5 448.4 C470.0 449.4 476.8 449.1 482.3 450.2 C487.8 451.2 493.4 453.9 498.5 454.9 C503.6 455.9 508.0 454.8 512.9 456.0 C517.8 457.1 523.1 459.6 527.9 461.7 C532.7 463.9 537.3 467.3 541.8 468.8 C546.3 470.3 550.4 470.4 555.0 470.8 C559.7 471.3 565.0 471.1 569.7 471.5 C574.4 472.0 579.0 473.4 583.4 473.7 C587.9 473.9 592.1 473.9 596.2 472.9 C600.3 471.9 603.9 468.6 608.0 467.6 C612.2 466.5 616.7 467.2 621.3 466.6 C626.0 466.0 631.5 464.2 636.1 463.8 C640.7 463.5 644.8 464.6 649.1 464.6 C653.5 464.6 658.0 464.0 662.1 464.0 C666.2 464.0 669.4 464.5 673.7 464.5 C678.0 464.6 683.0 465.7 688.0 464.5 C692.9 463.2 698.5 458.6 703.3 456.9 C708.2 455.2 712.7 455.9 716.9 454.4 C721.1 452.8 723.1 448.3 728.6 447.5 C734.1 446.8 744.5 447.9 749.8 449.9 C755.2 451.9 757.2 456.3 760.8 459.3 C764.3 462.3 766.8 465.2 771.0 467.9 C775.2 470.5 783.5 473.8 786.0 475.0 M562.0 313.0 C564.3 314.2 571.8 317.5 576.0 320.5 C580.2 323.4 583.9 327.0 587.4 330.5 C591.0 334.0 594.0 337.8 597.2 341.5 C600.5 345.3 603.3 350.5 607.1 353.3 C611.0 356.0 616.1 356.1 620.3 358.1 C624.5 360.0 629.0 360.5 632.4 364.9 C635.8 369.3 640.2 379.2 640.8 384.4 C641.5 389.6 637.9 391.4 636.2 395.9 C634.5 400.4 629.9 407.3 630.7 411.4 C631.5 415.6 638.4 418.1 641.2 420.9 C644.0 423.7 647.3 423.2 647.7 428.2 C648.1 433.3 643.4 445.8 643.4 451.5 C643.5 457.2 649.6 458.1 648.2 462.5 C646.8 466.9 637.2 475.4 635.0 478.0 M420.0 480.0 C422.1 480.8 429.0 483.3 432.7 484.9 C436.3 486.5 438.0 488.3 441.9 489.6 C445.8 490.9 451.7 491.4 456.0 492.6 C460.3 493.8 464.0 495.8 467.8 496.8 C471.5 497.9 474.6 498.0 478.5 498.7 C482.3 499.5 486.6 500.2 490.8 501.5 C495.0 502.9 499.7 503.4 503.5 506.8 C507.3 510.2 509.9 519.1 513.6 522.1 C517.3 525.1 521.8 523.5 525.7 524.8 C529.6 526.0 533.3 528.1 537.2 529.8 C541.0 531.5 545.4 533.3 548.9 535.1 C552.4 536.9 554.0 539.5 558.2 540.5 C562.5 541.4 569.3 540.5 574.2 540.8 C579.0 541.0 583.2 541.1 587.5 541.8 C591.9 542.5 597.9 544.5 600.0 545.0 M436.0 500.0 C436.8 502.7 438.8 511.6 440.7 516.4 C442.7 521.2 445.2 524.8 447.5 528.9 C449.9 532.9 451.9 536.5 454.8 540.9 C457.8 545.2 462.1 550.6 465.3 555.1 C468.4 559.6 471.3 561.9 473.6 567.8 C475.9 573.6 478.1 586.3 479.0 590.0 M718.0 540.0 C720.6 539.8 728.3 539.3 733.7 539.1 C739.2 538.8 745.8 536.9 750.8 538.5 C755.7 540.1 759.8 545.6 763.6 548.5 C767.4 551.4 770.5 553.3 773.4 556.0 C776.4 558.8 778.8 561.5 781.4 564.8 C784.0 568.1 787.7 574.1 789.0 576.0 M706.0 561.0 C706.9 563.3 709.6 570.1 711.6 574.9 C713.6 579.8 716.9 587.5 718.0 590.0 M470.0 300.0 C472.7 299.6 481.4 298.8 486.1 297.9 C490.9 297.0 492.9 294.4 498.5 294.7 C504.1 295.1 516.4 299.1 520.0 300.0 M420.0 400.0 C423.4 399.0 434.1 396.4 440.1 394.1 C446.1 391.8 451.0 388.7 456.2 386.2 C461.3 383.7 467.7 381.8 471.0 378.9 C474.3 376.1 473.4 371.9 475.9 369.0 C478.4 366.1 483.3 364.7 485.8 361.5 C488.3 358.3 488.6 353.6 490.9 350.0 C493.3 346.4 498.5 341.7 500.0 340.0 M390.0 470.0 C390.6 472.6 392.3 480.3 393.8 485.4 C395.2 490.6 395.8 496.7 398.7 500.9 C401.5 505.2 407.0 507.8 410.6 510.9 C414.3 514.0 417.2 516.4 420.4 519.5 C423.6 522.7 426.2 526.5 429.7 529.7 C433.2 532.9 437.7 535.5 441.2 538.7 C444.8 541.8 448.3 545.1 451.2 548.5 C454.2 551.9 456.6 554.8 459.1 559.2 C461.6 563.7 464.5 569.9 466.3 575.0 C468.1 580.1 469.4 587.5 470.0 590.0 M340.0 540.0 C338.1 543.3 329.8 554.2 328.8 559.9 C327.8 565.6 332.7 569.1 333.7 574.2 C334.8 579.2 334.8 587.4 335.0 590.0 M395.0 430.0 C396.9 429.0 402.4 425.7 406.4 423.9 C410.4 422.1 414.4 421.1 419.2 419.4 C424.0 417.8 429.9 415.5 435.1 413.9 C440.2 412.3 447.5 410.7 450.0 410.0 M600.0 440.0 C602.3 439.1 608.5 436.1 613.7 434.6 C619.0 433.1 626.2 432.6 631.5 430.9 C636.9 429.3 641.2 426.5 645.7 424.8 C650.3 423.0 654.6 422.5 659.0 420.4 C663.4 418.4 667.5 414.9 672.1 412.4 C676.6 409.8 681.7 407.2 686.3 405.2 C691.0 403.1 697.7 400.9 700.0 400.0 M300.0 175.0 C302.0 173.9 308.3 170.9 312.2 168.3 C316.2 165.7 319.9 161.6 323.7 159.1 C327.6 156.7 331.5 156.0 335.2 153.7 C338.9 151.5 341.7 147.2 345.9 145.6 C350.1 144.1 355.8 145.0 360.5 144.6 C365.2 144.1 369.6 143.2 374.1 142.9 C378.6 142.5 382.3 142.9 387.4 142.4 C392.5 141.9 402.1 140.4 405.0 140.0 M388.0 142.0 C388.8 138.3 393.4 125.8 392.9 119.6 C392.4 113.5 386.3 107.4 385.0 105.0 M297.0 156.0 C297.6 158.4 299.2 165.8 300.5 170.1 C301.9 174.5 304.3 180.0 305.0 182.0 M388.0 145.0 C390.9 146.3 400.3 150.0 405.4 152.6 C410.5 155.1 413.0 158.2 418.7 160.2 C424.5 162.3 436.5 164.2 440.0 165.0 M321.0 145.0 C323.6 145.0 331.7 144.8 336.4 145.1 C341.1 145.3 344.9 146.3 349.4 146.4 C353.8 146.5 358.7 145.9 363.1 145.6 C367.5 145.2 371.5 144.9 375.7 144.3 C379.8 143.7 385.9 142.4 388.0 142.0 M370.0 236.0 C370.2 238.4 370.8 245.8 371.2 250.1 C371.7 254.5 372.1 257.7 372.5 262.2 C372.9 266.8 372.8 272.6 373.6 277.3 C374.4 281.9 376.7 285.3 377.4 290.1 C378.2 294.9 377.4 301.1 378.1 306.0 C378.8 310.8 380.7 314.1 381.7 319.1 C382.6 324.1 383.0 331.0 383.8 335.9 C384.7 340.7 386.3 344.0 386.7 348.2 C387.2 352.3 386.5 356.3 386.4 360.7 C386.3 365.1 386.1 370.5 386.4 374.7 C386.6 379.0 387.7 384.1 388.0 386.0 M337.0 236.0 C336.1 238.5 333.4 245.9 331.9 250.9 C330.3 256.0 328.5 262.0 327.8 266.4 C327.0 270.9 327.6 273.4 327.5 277.6 C327.4 281.7 328.0 286.9 327.4 291.1 C326.7 295.4 323.3 299.1 323.6 303.0 C323.9 307.0 328.3 310.9 329.3 314.9 C330.3 318.9 328.0 322.0 329.8 327.1 C331.7 332.2 339.2 339.7 340.4 345.4 C341.7 351.2 337.8 357.0 337.4 361.4 C337.1 365.9 338.6 368.1 338.5 372.2 C338.4 376.3 337.2 383.7 337.0 386.0 M400.0 230.0 C400.2 232.7 400.8 241.4 401.3 246.2 C401.8 251.1 402.9 255.1 403.2 259.2 C403.5 263.3 402.8 267.0 403.1 270.8 C403.4 274.7 404.5 278.6 405.0 282.6 C405.4 286.6 404.7 290.1 405.9 294.9 C407.1 299.6 409.9 305.6 412.0 311.0 C414.0 316.4 417.1 322.0 418.1 327.2 C419.1 332.3 417.4 337.3 417.9 342.1 C418.4 346.9 420.5 353.7 421.0 356.0 M424.0 206.0 C424.7 208.0 426.5 214.2 428.0 218.0 C429.6 221.7 431.8 224.4 433.3 228.5 C434.7 232.6 436.5 237.8 436.7 242.4 C436.9 247.0 435.0 251.9 434.5 256.2 C434.0 260.4 433.8 263.6 433.6 267.9 C433.3 272.2 433.0 277.2 433.1 281.9 C433.2 286.5 433.5 290.9 434.1 295.8 C434.7 300.7 435.8 306.2 436.8 311.2 C437.7 316.1 439.3 320.9 440.0 325.3 C440.8 329.8 441.0 333.7 441.2 337.7 C441.5 341.7 441.2 345.0 441.4 349.3 C441.6 353.6 442.1 359.2 442.6 363.5 C443.1 367.8 443.9 371.2 444.3 374.9 C444.7 378.7 444.9 384.2 445.0 386.0 M252.0 248.0 C254.8 247.5 263.4 246.1 269.0 244.9 C274.7 243.7 280.8 241.4 285.8 240.7 C290.9 240.0 294.3 240.1 299.5 240.5 C304.7 241.0 311.5 242.4 316.9 243.3 C322.2 244.3 326.5 244.6 331.5 246.1 C336.5 247.5 342.6 250.7 347.0 251.9 C351.5 253.1 354.5 252.4 358.2 253.2 C361.9 254.0 365.2 256.7 369.4 256.7 C373.6 256.8 378.6 254.5 383.4 253.8 C388.3 253.1 393.9 253.3 398.5 252.4 C403.0 251.5 406.4 249.3 410.6 248.2 C414.7 247.2 418.6 246.3 423.3 246.0 C427.9 245.8 433.8 246.8 438.5 246.7 C443.2 246.7 447.8 245.9 451.6 245.6 C455.4 245.2 456.9 244.8 461.4 244.6 C466.0 244.5 473.1 245.4 478.8 244.9 C484.5 244.4 490.3 242.6 495.5 241.9 C500.8 241.2 505.0 240.7 510.2 240.7 C515.5 240.7 524.2 241.8 527.0 242.0 M298.0 281.0 C300.3 281.4 306.9 283.1 311.9 283.2 C316.9 283.3 322.8 281.4 328.0 281.6 C333.1 281.8 337.6 284.1 342.6 284.2 C347.6 284.4 352.9 283.1 357.8 282.6 C362.7 282.0 366.9 281.6 371.9 281.0 C376.8 280.3 382.3 279.0 387.6 278.5 C392.8 277.9 398.4 277.7 403.4 277.7 C408.4 277.8 412.5 278.7 417.6 278.9 C422.8 279.1 429.3 279.2 434.4 278.9 C439.5 278.6 443.7 277.2 448.2 277.3 C452.7 277.4 456.5 279.2 461.6 279.5 C466.7 279.8 473.4 279.2 478.7 279.0 C483.9 278.9 487.6 278.3 493.0 278.3 C498.3 278.3 505.2 279.5 510.5 279.1 C515.8 278.7 519.9 276.6 524.8 275.9 C529.7 275.2 537.5 275.1 540.0 275.0 M276.0 350.0 C278.8 349.4 287.7 347.1 292.9 346.1 C298.1 345.2 302.8 345.1 307.3 344.6 C311.9 344.1 316.1 343.0 320.4 343.1 C324.7 343.1 328.6 344.7 333.2 344.8 C337.8 344.9 343.7 343.8 347.9 343.9 C352.2 343.9 354.4 345.1 358.7 345.0 C363.0 344.9 368.9 342.9 373.9 343.1 C378.8 343.4 383.2 345.8 388.3 346.3 C393.3 346.8 399.3 345.9 404.2 346.1 C409.2 346.2 413.8 347.4 417.9 347.3 C422.1 347.2 425.2 345.6 429.0 345.4 C432.8 345.3 436.9 346.4 441.0 346.4 C445.1 346.4 449.4 345.7 453.6 345.4 C457.7 345.1 461.8 345.1 465.7 344.7 C469.6 344.2 472.0 344.2 476.9 342.5 C481.8 340.9 489.9 337.3 495.1 334.6 C500.2 331.9 501.9 328.9 507.7 326.4 C513.6 324.0 526.3 321.1 530.0 320.0 M385.0 169.0 C387.1 170.5 393.1 175.0 397.7 178.2 C402.3 181.4 407.6 186.2 412.5 188.5 C417.3 190.8 422.0 190.6 426.5 192.0 C431.1 193.3 435.0 194.5 439.8 196.6 C444.7 198.7 452.3 201.9 455.5 204.6 C458.7 207.2 457.5 209.2 459.1 212.5 C460.7 215.8 462.9 220.4 465.2 224.5 C467.6 228.7 471.7 233.6 473.3 237.3 C474.8 241.0 474.1 242.7 474.6 246.6 C475.0 250.4 475.5 256.2 475.9 260.7 C476.3 265.2 476.9 269.9 477.0 273.6 C477.1 277.3 476.8 278.6 476.6 282.9 C476.4 287.2 476.5 294.7 475.8 299.4 C475.1 304.2 473.7 306.8 472.6 311.4 C471.5 315.9 471.3 322.8 469.3 326.8 C467.3 330.8 463.2 332.4 460.7 335.4 C458.2 338.4 456.4 341.5 454.2 344.8 C452.1 348.0 451.0 352.0 447.9 354.9 C444.9 357.9 439.6 359.9 435.9 362.4 C432.3 364.8 429.6 366.9 426.1 369.4 C422.6 372.0 418.8 374.8 414.9 377.5 C411.1 380.3 405.0 384.6 403.0 386.0 M358.0 302.0 C358.4 303.8 359.3 308.8 360.2 313.0 C361.2 317.3 363.9 323.2 363.6 327.6 C363.2 332.0 360.7 335.7 358.1 339.4 C355.5 343.0 350.0 345.3 347.7 349.3 C345.4 353.4 346.1 358.5 344.3 363.6 C342.5 368.7 338.2 377.3 337.0 380.0 M300.0 265.0 C303.2 265.8 312.9 269.5 319.0 269.8 C325.0 270.1 331.1 267.6 336.3 266.6 C341.5 265.6 346.0 263.5 350.2 263.8 C354.4 264.1 357.3 267.3 361.5 268.4 C365.6 269.4 372.7 269.7 375.0 270.0 M305.0 300.0 C307.1 300.9 313.5 304.0 317.9 305.7 C322.2 307.4 326.6 309.4 331.0 310.3 C335.4 311.2 339.1 310.4 344.0 311.1 C349.0 311.9 355.1 314.7 360.7 314.7 C366.4 314.7 372.3 311.9 378.2 311.1 C384.1 310.2 391.1 310.0 396.0 309.5 C400.9 308.9 404.0 309.1 407.8 307.8 C411.5 306.6 414.6 303.1 418.3 301.8 C422.0 300.5 428.1 300.3 430.0 300.0 M455.0 190.0 C456.4 191.9 461.1 197.7 463.5 201.2 C465.9 204.6 465.9 208.2 469.4 210.7 C472.9 213.1 479.8 214.1 484.6 215.8 C489.5 217.6 493.6 220.8 498.6 221.2 C503.6 221.6 510.1 219.1 514.8 218.3 C519.5 217.6 522.5 217.3 526.7 216.8 C530.9 216.2 537.8 215.3 540.0 215.0 M270.0 228.0 C272.2 228.4 278.5 230.7 283.5 230.3 C288.5 230.0 297.2 226.7 300.0 226.0 M314.7 167.0 C316.2 168.4 321.4 173.3 323.6 175.4 C325.9 177.5 325.9 179.7 328.0 179.7 C330.1 179.7 332.6 177.4 336.2 175.5 C339.9 173.6 345.9 169.3 349.7 168.3 C353.4 167.3 356.1 168.3 358.7 169.5 C361.3 170.7 362.5 173.5 365.1 175.5 C367.7 177.5 372.0 181.4 374.1 181.5 C376.2 181.5 375.8 177.3 377.6 175.7 C379.4 174.2 383.8 172.6 385.0 172.0 M325.6 181.5 C325.6 183.7 325.2 191.5 325.4 194.9 C325.5 198.3 325.6 199.7 326.6 201.9 C327.6 204.1 328.5 205.6 331.4 208.1 C334.3 210.5 340.2 215.1 344.0 216.7 C347.7 218.3 350.2 218.4 353.8 217.5 C357.4 216.5 362.5 213.1 365.8 211.3 C369.2 209.5 371.8 208.4 373.9 206.6 C376.0 204.9 378.3 203.6 378.5 200.8 C378.6 198.1 376.5 192.1 374.8 190.0 C373.0 188.0 370.6 189.7 368.1 188.5 C365.6 187.3 361.4 183.9 360.0 183.0 M329.2 215.3 C329.2 217.2 327.9 223.3 329.2 226.5 C330.4 229.7 333.8 234.3 336.7 234.6 C339.6 235.0 342.8 229.9 346.6 228.5 C350.4 227.1 356.0 226.9 359.5 226.3 C363.0 225.7 365.3 225.9 367.8 225.0 C370.3 224.1 372.0 223.1 374.3 221.0 C376.6 218.9 380.1 215.1 381.6 212.2 C383.1 209.2 383.2 204.8 383.5 203.3 M381.0 200.8 C381.3 203.2 381.9 210.9 382.7 215.3 C383.5 219.8 384.9 223.7 385.6 227.6 C386.2 231.6 384.9 234.1 386.7 238.9 C388.6 243.8 394.9 250.7 396.8 256.7 C398.6 262.7 397.8 271.9 398.0 275.0 M407.6 161.0 C408.8 164.0 414.3 173.2 414.9 178.8 C415.5 184.4 410.3 190.2 411.1 194.4 C411.9 198.6 416.3 201.3 419.5 204.1 C422.7 206.8 426.7 207.6 430.5 210.8 C434.4 214.0 440.3 219.5 442.9 223.3 C445.5 227.0 445.6 231.7 446.2 233.4 M404.0 232.2 C404.9 233.4 408.3 236.0 409.6 239.3 C411.0 242.6 410.6 248.3 412.1 252.2 C413.6 256.0 417.4 258.6 418.6 262.4 C419.9 266.2 419.5 272.9 419.7 275.0 M411.2 248.0 C414.2 248.0 423.4 247.7 429.3 247.7 C435.3 247.7 444.1 248.0 447.0 248.0 M311.0 200.8 C309.1 200.9 303.3 201.2 299.3 201.7 C295.3 202.1 289.1 203.0 287.0 203.3 M294.0 214.0 C296.5 213.9 304.4 213.3 309.2 213.3 C314.0 213.3 320.7 213.9 323.0 214.0 M307.5 200.8 C307.3 202.9 306.6 208.9 306.5 213.5 C306.5 218.2 306.5 222.6 307.2 228.5 C308.0 234.4 310.8 244.0 311.0 248.8 C311.2 253.7 309.1 256.1 308.7 257.5 M314.7 229.8 C316.9 230.5 324.1 231.8 328.1 234.0 C332.2 236.2 336.4 239.2 338.8 243.0 C341.2 246.7 343.6 251.2 342.8 256.6 C342.0 261.9 335.5 271.9 334.0 275.0 M412.5 187.6 C414.9 187.7 421.4 189.9 427.0 188.5 C432.7 187.0 443.0 180.6 446.2 179.0 M395.6 155.0 C397.1 156.8 401.7 162.3 404.7 165.9 C407.7 169.5 412.2 174.9 413.7 176.7 M349.7 168.3 C350.0 167.0 351.5 163.4 351.5 160.3 C351.6 157.3 350.3 151.7 350.0 150.0 M366.6 187.6 C365.6 189.7 362.3 195.2 360.6 200.1 C358.8 205.0 356.8 214.2 356.0 217.0" fill="none" stroke="#eea663" stroke-width="2.3" stroke-linejoin="round" stroke-linecap="round"/>
<text x="43" y="51" font-size="20" fill="#7d7d7d" letter-spacing="-1.2" stroke="#fff" stroke-width="3.2" stroke-opacity="0.6" paint-order="stroke" text-anchor="start" font-family="Liberation Sans">황해남도</text><text x="43" y="51" font-size="20" fill="#7d7d7d" letter-spacing="-1.2" stroke="#7d7d7d" stroke-width="0.5" text-anchor="start" font-family="Liberation Sans">황해남도</text>
<text x="258" y="116" font-size="13" fill="#555555" letter-spacing="-0.8" stroke="#fff" stroke-width="3" stroke-opacity="0.7" paint-order="stroke" font-family="Liberation Sans">개성</text><text x="258" y="116" font-size="13" fill="#555555" letter-spacing="-0.8" stroke="#555555" stroke-width="0.45" font-family="Liberation Sans">개성</text>
<text x="342" y="132" font-size="13" fill="#555555" letter-spacing="-1.3" stroke="#fff" stroke-width="3" stroke-opacity="0.7" paint-order="stroke" font-family="Liberation Sans">동두천시</text><text x="342" y="132" font-size="13" fill="#555555" letter-spacing="-1.3" stroke="#555555" stroke-width="0.45" font-family="Liberation Sans">동두천시</text>
<text x="470" y="137" font-size="13" fill="#555555" letter-spacing="-1.3" stroke="#fff" stroke-width="3" stroke-opacity="0.7" paint-order="stroke" font-family="Liberation Sans">춘천시</text><text x="470" y="137" font-size="13" fill="#555555" letter-spacing="-1.3" stroke="#555555" stroke-width="0.45" font-family="Liberation Sans">춘천시</text>
<text x="626" y="62" font-size="13" fill="#555555" letter-spacing="-1.3" stroke="#fff" stroke-width="3" stroke-opacity="0.7" paint-order="stroke" font-family="Liberation Sans">속초시</text><text x="626" y="62" font-size="13" fill="#555555" letter-spacing="-1.3" stroke="#555555" stroke-width="0.45" font-family="Liberation Sans">속초시</text>
<text x="531" y="159" font-size="19.5" fill="#858585" letter-spacing="-3.6" stroke="#fff" stroke-width="3.2" stroke-opacity="0.6" paint-order="stroke" text-anchor="start" font-family="Liberation Sans">강원특별자치도</text><text x="531" y="159" font-size="19.5" fill="#858585" letter-spacing="-3.6" stroke="#858585" stroke-width="0.5" text-anchor="start" font-family="Liberation Sans">강원특별자치도</text>
<text x="679" y="165" font-size="13" fill="#555555" letter-spacing="-1.3" stroke="#fff" stroke-width="3" stroke-opacity="0.7" paint-order="stroke" font-family="Liberation Sans">강릉시</text><text x="679" y="165" font-size="13" fill="#555555" letter-spacing="-1.3" stroke="#555555" stroke-width="0.45" font-family="Liberation Sans">강릉시</text>
<text x="297" y="165" font-size="13" fill="#555555" letter-spacing="-1.3" stroke="#fff" stroke-width="3" stroke-opacity="0.7" paint-order="stroke" font-family="Liberation Sans">파주시</text><text x="297" y="165" font-size="13" fill="#555555" letter-spacing="-1.3" stroke="#555555" stroke-width="0.45" font-family="Liberation Sans">파주시</text>
<text x="345" y="160" font-size="13" fill="#555555" letter-spacing="-1.3" stroke="#fff" stroke-width="3" stroke-opacity="0.7" paint-order="stroke" font-family="Liberation Sans">양주시</text><text x="345" y="160" font-size="13" fill="#555555" letter-spacing="-1.3" stroke="#555555" stroke-width="0.45" font-family="Liberation Sans">양주시</text>
<text x="285" y="198" font-size="13" fill="#555555" letter-spacing="-1.3" stroke="#fff" stroke-width="3" stroke-opacity="0.7" paint-order="stroke" font-family="Liberation Sans">김포시</text><text x="285" y="198" font-size="13" fill="#555555" letter-spacing="-1.3" stroke="#555555" stroke-width="0.45" font-family="Liberation Sans">김포시</text>
<text x="341" y="208" font-size="15" fill="#555555" letter-spacing="-1.3" stroke="#fff" stroke-width="3" stroke-opacity="0.7" paint-order="stroke" font-family="Liberation Sans">서울</text><text x="341" y="208" font-size="15" fill="#555555" letter-spacing="-1.3" stroke="#555555" stroke-width="0.45" font-family="Liberation Sans">서울</text>
<text x="372" y="194" font-size="13" fill="#555555" letter-spacing="-1.3" stroke="#fff" stroke-width="3" stroke-opacity="0.7" paint-order="stroke" font-family="Liberation Sans">남양주시</text><text x="372" y="194" font-size="13" fill="#555555" letter-spacing="-1.3" stroke="#555555" stroke-width="0.45" font-family="Liberation Sans">남양주시</text>
<text x="391" y="230" font-size="20" fill="#878787" letter-spacing="-1.5" stroke="#fff" stroke-width="3.2" stroke-opacity="0.6" paint-order="stroke" text-anchor="start" font-family="Liberation Sans">경기도</text><text x="391" y="230" font-size="20" fill="#878787" letter-spacing="-1.5" stroke="#878787" stroke-width="0.5" text-anchor="start" font-family="Liberation Sans">경기도</text>
<text x="721" y="219" font-size="13" fill="#555555" letter-spacing="-1.3" stroke="#fff" stroke-width="3" stroke-opacity="0.7" paint-order="stroke" font-family="Liberation Sans">동해시</text><text x="721" y="219" font-size="13" fill="#555555" letter-spacing="-1.3" stroke="#555555" stroke-width="0.45" font-family="Liberation Sans">동해시</text>
<text x="290" y="236" font-size="14" fill="#555555" letter-spacing="-1.3" stroke="#fff" stroke-width="3" stroke-opacity="0.7" paint-order="stroke" font-family="Liberation Sans">인천</text><text x="290" y="236" font-size="14" fill="#555555" letter-spacing="-1.3" stroke="#555555" stroke-width="0.45" font-family="Liberation Sans">인천</text>
<text x="330" y="251" font-size="13" fill="#555555" letter-spacing="-1.3" stroke="#fff" stroke-width="3" stroke-opacity="0.7" paint-order="stroke" font-family="Liberation Sans">안양시</text><text x="330" y="251" font-size="13" fill="#555555" letter-spacing="-1.3" stroke="#555555" stroke-width="0.45" font-family="Liberation Sans">안양시</text>
<text x="504" y="261" font-size="13" fill="#555555" letter-spacing="-1.3" stroke="#fff" stroke-width="3" stroke-opacity="0.7" paint-order="stroke" font-family="Liberation Sans">원주시</text><text x="504" y="261" font-size="13" fill="#555555" letter-spacing="-1.3" stroke="#555555" stroke-width="0.45" font-family="Liberation Sans">원주시</text>
<text x="416" y="277" font-size="13" fill="#555555" letter-spacing="-1.3" stroke="#fff" stroke-width="3" stroke-opacity="0.7" paint-order="stroke" font-family="Liberation Sans">이천시</text><text x="416" y="277" font-size="13" fill="#555555" letter-spacing="-1.3" stroke="#555555" stroke-width="0.45" font-family="Liberation Sans">이천시</text>
<text x="307" y="294" font-size="13" fill="#555555" letter-spacing="-1.3" stroke="#fff" stroke-width="3" stroke-opacity="0.7" paint-order="stroke" font-family="Liberation Sans">화성시</text><text x="307" y="294" font-size="13" fill="#555555" letter-spacing="-1.3" stroke="#555555" stroke-width="0.45" font-family="Liberation Sans">화성시</text>
<text x="351" y="305" font-size="13" fill="#555555" letter-spacing="-1.3" stroke="#fff" stroke-width="3" stroke-opacity="0.7" paint-order="stroke" font-family="Liberation Sans">오산시</text><text x="351" y="305" font-size="13" fill="#555555" letter-spacing="-1.3" stroke="#555555" stroke-width="0.45" font-family="Liberation Sans">오산시</text>
<text x="525" y="309" font-size="13" fill="#555555" letter-spacing="-1.3" stroke="#fff" stroke-width="3" stroke-opacity="0.7" paint-order="stroke" font-family="Liberation Sans">제천시</text><text x="525" y="309" font-size="13" fill="#555555" letter-spacing="-1.3" stroke="#555555" stroke-width="0.45" font-family="Liberation Sans">제천시</text>
<text x="698" y="302" font-size="13" fill="#555555" letter-spacing="-1.3" stroke="#fff" stroke-width="3" stroke-opacity="0.7" paint-order="stroke" font-family="Liberation Sans">태백시</text><text x="698" y="302" font-size="13" fill="#555555" letter-spacing="-1.3" stroke="#555555" stroke-width="0.45" font-family="Liberation Sans">태백시</text>
<text x="360" y="342" font-size="13" fill="#555555" letter-spacing="-1.3" stroke="#fff" stroke-width="3" stroke-opacity="0.7" paint-order="stroke" font-family="Liberation Sans">평택시</text><text x="360" y="342" font-size="13" fill="#555555" letter-spacing="-1.3" stroke="#555555" stroke-width="0.45" font-family="Liberation Sans">평택시</text>
<text x="505" y="342" font-size="13" fill="#555555" letter-spacing="-1.3" stroke="#fff" stroke-width="3" stroke-opacity="0.7" paint-order="stroke" font-family="Liberation Sans">충주시</text><text x="505" y="342" font-size="13" fill="#555555" letter-spacing="-1.3" stroke="#555555" stroke-width="0.45" font-family="Liberation Sans">충주시</text>
<text x="603" y="348" font-size="13" fill="#3f8a4a" letter-spacing="-1.3" stroke="#fff" stroke-width="3" stroke-opacity="0.7" paint-order="stroke" font-family="Liberation Sans">소백산</text><text x="603" y="348" font-size="13" fill="#3f8a4a" letter-spacing="-1.3" stroke="#3f8a4a" stroke-width="0.45" font-family="Liberation Sans">소백산</text>
<text x="597" y="364" font-size="13" fill="#3f8a4a" letter-spacing="-1.3" stroke="#fff" stroke-width="3" stroke-opacity="0.7" paint-order="stroke" font-family="Liberation Sans">국립공원</text><text x="597" y="364" font-size="13" fill="#3f8a4a" letter-spacing="-1.3" stroke="#3f8a4a" stroke-width="0.45" font-family="Liberation Sans">국립공원</text>
<text x="632" y="391" font-size="13" fill="#555555" letter-spacing="-1.3" stroke="#fff" stroke-width="3" stroke-opacity="0.7" paint-order="stroke" font-family="Liberation Sans">영주시</text><text x="632" y="391" font-size="13" fill="#555555" letter-spacing="-1.3" stroke="#555555" stroke-width="0.45" font-family="Liberation Sans">영주시</text>
<text x="184" y="357" font-size="13" fill="#4f6f90" letter-spacing="-1.3" stroke="#fff" stroke-width="3" stroke-opacity="0.7" paint-order="stroke" font-family="Liberation Sans">태안해안</text><text x="184" y="357" font-size="13" fill="#4f6f90" letter-spacing="-1.3" stroke="#4f6f90" stroke-width="0.45" font-family="Liberation Sans">태안해안</text>
<text x="184" y="372" font-size="13" fill="#4f6f90" letter-spacing="-1.3" stroke="#fff" stroke-width="3" stroke-opacity="0.7" paint-order="stroke" font-family="Liberation Sans">국립공원</text><text x="184" y="372" font-size="13" fill="#4f6f90" letter-spacing="-1.3" stroke="#4f6f90" stroke-width="0.45" font-family="Liberation Sans">국립공원</text>
<text x="236" y="388" font-size="13" fill="#555555" letter-spacing="-1.3" stroke="#fff" stroke-width="3" stroke-opacity="0.7" paint-order="stroke" font-family="Liberation Sans">서산시</text><text x="236" y="388" font-size="13" fill="#555555" letter-spacing="-1.3" stroke="#555555" stroke-width="0.45" font-family="Liberation Sans">서산시</text>
<text x="336" y="387" font-size="13" fill="#555555" letter-spacing="-1.3" stroke="#fff" stroke-width="3" stroke-opacity="0.7" paint-order="stroke" font-family="Liberation Sans">아산시</text><text x="336" y="387" font-size="13" fill="#555555" letter-spacing="-1.3" stroke="#555555" stroke-width="0.45" font-family="Liberation Sans">아산시</text>
<text x="433" y="412" font-size="19.5" fill="#878787" letter-spacing="-1.2" stroke="#fff" stroke-width="3.2" stroke-opacity="0.6" paint-order="stroke" text-anchor="start" font-family="Liberation Sans">충청북도</text><text x="433" y="412" font-size="19.5" fill="#878787" letter-spacing="-1.2" stroke="#878787" stroke-width="0.5" text-anchor="start" font-family="Liberation Sans">충청북도</text>
<text x="553" y="433" font-size="13" fill="#555555" letter-spacing="-1.3" stroke="#fff" stroke-width="3" stroke-opacity="0.7" paint-order="stroke" font-family="Liberation Sans">문경시</text><text x="553" y="433" font-size="13" fill="#555555" letter-spacing="-1.3" stroke="#555555" stroke-width="0.45" font-family="Liberation Sans">문경시</text>
<text x="490" y="437" font-size="13" fill="#3f8a4a" letter-spacing="-1.3" stroke="#fff" stroke-width="3" stroke-opacity="0.7" paint-order="stroke" font-family="Liberation Sans">속리산</text><text x="490" y="437" font-size="13" fill="#3f8a4a" letter-spacing="-1.3" stroke="#3f8a4a" stroke-width="0.45" font-family="Liberation Sans">속리산</text>
<text x="484" y="452" font-size="13" fill="#3f8a4a" letter-spacing="-1.3" stroke="#fff" stroke-width="3" stroke-opacity="0.7" paint-order="stroke" font-family="Liberation Sans">국립공원</text><text x="484" y="452" font-size="13" fill="#3f8a4a" letter-spacing="-1.3" stroke="#3f8a4a" stroke-width="0.45" font-family="Liberation Sans">국립공원</text>
<text x="652" y="437" font-size="13" fill="#555555" letter-spacing="-1.3" stroke="#fff" stroke-width="3" stroke-opacity="0.7" paint-order="stroke" font-family="Liberation Sans">안동시</text><text x="652" y="437" font-size="13" fill="#555555" letter-spacing="-1.3" stroke="#555555" stroke-width="0.45" font-family="Liberation Sans">안동시</text>
<text x="285" y="462" font-size="19.5" fill="#878787" letter-spacing="-1.5" stroke="#fff" stroke-width="3.2" stroke-opacity="0.6" paint-order="stroke" text-anchor="start" font-family="Liberation Sans">충청남도</text><text x="285" y="462" font-size="19.5" fill="#878787" letter-spacing="-1.5" stroke="#878787" stroke-width="0.5" text-anchor="start" font-family="Liberation Sans">충청남도</text>
<text x="359" y="465" font-size="13" fill="#555555" letter-spacing="-1.3" stroke="#fff" stroke-width="3" stroke-opacity="0.7" paint-order="stroke" font-family="Liberation Sans">공주시</text><text x="359" y="465" font-size="13" fill="#555555" letter-spacing="-1.3" stroke="#555555" stroke-width="0.45" font-family="Liberation Sans">공주시</text>
<text x="397" y="456" font-size="13" fill="#555555" letter-spacing="-1.3" stroke="#fff" stroke-width="3" stroke-opacity="0.7" paint-order="stroke" font-family="Liberation Sans">세종</text><text x="397" y="456" font-size="13" fill="#555555" letter-spacing="-1.3" stroke="#555555" stroke-width="0.45" font-family="Liberation Sans">세종</text>
<text x="548" y="473" font-size="13" fill="#555555" letter-spacing="-1.3" stroke="#fff" stroke-width="3" stroke-opacity="0.7" paint-order="stroke" font-family="Liberation Sans">상주시</text><text x="548" y="473" font-size="13" fill="#555555" letter-spacing="-1.3" stroke="#555555" stroke-width="0.45" font-family="Liberation Sans">상주시</text>
<text x="694" y="468" font-size="19.5" fill="#878787" letter-spacing="-1.2" stroke="#fff" stroke-width="3.2" stroke-opacity="0.6" paint-order="stroke" text-anchor="start" font-family="Liberation Sans">경상북도</text><text x="694" y="468" font-size="19.5" fill="#878787" letter-spacing="-1.2" stroke="#878787" stroke-width="0.5" text-anchor="start" font-family="Liberation Sans">경상북도</text>
<text x="266" y="490" font-size="13" fill="#555555" letter-spacing="-1.3" stroke="#fff" stroke-width="3" stroke-opacity="0.7" paint-order="stroke" font-family="Liberation Sans">보령시</text><text x="266" y="490" font-size="13" fill="#555555" letter-spacing="-1.3" stroke="#555555" stroke-width="0.45" font-family="Liberation Sans">보령시</text>
<text x="414" y="490" font-size="14" fill="#555555" letter-spacing="-1.3" stroke="#fff" stroke-width="3" stroke-opacity="0.7" paint-order="stroke" font-family="Liberation Sans">대전</text><text x="414" y="490" font-size="14" fill="#555555" letter-spacing="-1.3" stroke="#555555" stroke-width="0.45" font-family="Liberation Sans">대전</text>
<text x="539" y="534" font-size="13" fill="#555555" letter-spacing="-1.3" stroke="#fff" stroke-width="3" stroke-opacity="0.7" paint-order="stroke" font-family="Liberation Sans">김천시</text><text x="539" y="534" font-size="13" fill="#555555" letter-spacing="-1.3" stroke="#555555" stroke-width="0.45" font-family="Liberation Sans">김천시</text>
<text x="355" y="524" font-size="13" fill="#555555" letter-spacing="-1.3" stroke="#fff" stroke-width="3" stroke-opacity="0.7" paint-order="stroke" font-family="Liberation Sans">논산시</text><text x="355" y="524" font-size="13" fill="#555555" letter-spacing="-1.3" stroke="#555555" stroke-width="0.45" font-family="Liberation Sans">논산시</text>
<text x="764" y="562" font-size="13" fill="#555555" letter-spacing="-1.3" stroke="#fff" stroke-width="3" stroke-opacity="0.7" paint-order="stroke" font-family="Liberation Sans">포항시</text><text x="764" y="562" font-size="13" fill="#555555" letter-spacing="-1.3" stroke="#555555" stroke-width="0.45" font-family="Liberation Sans">포항시</text>
<text x="289" y="572" font-size="13" fill="#555555" letter-spacing="-1.3" stroke="#fff" stroke-width="3" stroke-opacity="0.7" paint-order="stroke" font-family="Liberation Sans">군산시</text><text x="289" y="572" font-size="13" fill="#555555" letter-spacing="-1.3" stroke="#555555" stroke-width="0.45" font-family="Liberation Sans">군산시</text>
<text x="330" y="578" font-size="13" fill="#555555" letter-spacing="-1.3" stroke="#fff" stroke-width="3" stroke-opacity="0.7" paint-order="stroke" font-family="Liberation Sans">익산시</text><text x="330" y="578" font-size="13" fill="#555555" letter-spacing="-1.3" stroke="#555555" stroke-width="0.45" font-family="Liberation Sans">익산시</text>
<text x="477" y="594" font-size="13" fill="#555555" letter-spacing="-1.3" stroke="#fff" stroke-width="3" stroke-opacity="0.7" paint-order="stroke" font-family="Liberation Sans">덕유산</text><text x="477" y="594" font-size="13" fill="#555555" letter-spacing="-1.3" stroke="#555555" stroke-width="0.45" font-family="Liberation Sans">덕유산</text>
<text x="123" y="236" font-size="12" fill="#7d7d7d" letter-spacing="-0.6" stroke="#fff" stroke-width="3" stroke-opacity="0.7" paint-order="stroke" font-family="Liberation Sans">인천-백령페리항로</text><text x="123" y="236" font-size="12" fill="#7d7d7d" letter-spacing="-0.6" stroke="#7d7d7d" stroke-width="0.45" font-family="Liberation Sans">인천-백령페리항로</text>
<text x="120" y="582" font-size="12" font-weight="700" fill="#777" font-family="Liberation Sans" transform="rotate(-8 120 582)">제</text>
<text x="0" y="4" font-size="11" fill="#6f7f95" stroke="#6f7f95" stroke-width="0.3" font-family="Liberation Sans" text-anchor="middle" transform="translate(841 492) rotate(131)" letter-spacing="-1.2">포항울릉도여객선 항로</text>
<polyline points="787.0,555.0 807.0,530.0" fill="none" stroke="#6f93bf" stroke-width="0.8" stroke-linejoin="round" stroke-linecap="round" stroke-dasharray="4 2"/>
<g transform="translate(246.5,214)"><path d="M1.3 5.2 H23.7 C24.7 7 25.0 9 24.5 11 C24.0 14 20.0 16 12.5 18 C5 16 1 14 0.5 11 C0 9 0.3 7 1.3 5.2Z" fill="#4a8cf3" stroke="#fff" stroke-width="0.8" stroke-opacity="0.7"/><path d="M1.3 5.2 C0.8 3.6 1.8 2.2 3.2 2 Q6.2 0.2 11.5 1.8 Q12.5 0 13.5 1.8 Q18.8 0.2 21.8 2 C23.2 2.2 24.2 3.6 23.7 5.2Z" fill="#f2321f"/><text x="12.5" y="14.8" font-size="10" fill="#fff" text-anchor="middle" font-family="Liberation Sans" letter-spacing="-0.4">110</text></g>
<g transform="translate(294.5,258)"><path d="M1.3 5.2 H23.7 C24.7 7 25.0 9 24.5 11 C24.0 14 20.0 16 12.5 18 C5 16 1 14 0.5 11 C0 9 0.3 7 1.3 5.2Z" fill="#4a8cf3" stroke="#fff" stroke-width="0.8" stroke-opacity="0.7"/><path d="M1.3 5.2 C0.8 3.6 1.8 2.2 3.2 2 Q6.2 0.2 11.5 1.8 Q12.5 0 13.5 1.8 Q18.8 0.2 21.8 2 C23.2 2.2 24.2 3.6 23.7 5.2Z" fill="#f2321f"/><text x="12.5" y="14.8" font-size="10" fill="#fff" text-anchor="middle" font-family="Liberation Sans" letter-spacing="-0.4">153</text></g>
<g transform="translate(454.0,237)"><path d="M1.3 5.2 H18.7 C19.7 7 20.0 9 19.5 11 C19.0 14 15.0 16 10.0 18 C5 16 1 14 0.5 11 C0 9 0.3 7 1.3 5.2Z" fill="#4a8cf3" stroke="#fff" stroke-width="0.8" stroke-opacity="0.7"/><path d="M1.3 5.2 C0.8 3.6 1.8 2.2 3.2 2 Q5.0 0.2 9.0 1.8 Q10.0 0 11.0 1.8 Q15.0 0.2 16.8 2 C18.2 2.2 19.2 3.6 18.7 5.2Z" fill="#f2321f"/><text x="10.0" y="14.8" font-size="10.5" fill="#fff" text-anchor="middle" font-family="Liberation Sans" letter-spacing="-0.4">52</text></g>
<g transform="translate(561.0,212)"><path d="M1.3 5.2 H18.7 C19.7 7 20.0 9 19.5 11 C19.0 14 15.0 16 10.0 18 C5 16 1 14 0.5 11 C0 9 0.3 7 1.3 5.2Z" fill="#4a8cf3" stroke="#fff" stroke-width="0.8" stroke-opacity="0.7"/><path d="M1.3 5.2 C0.8 3.6 1.8 2.2 3.2 2 Q5.0 0.2 9.0 1.8 Q10.0 0 11.0 1.8 Q15.0 0.2 16.8 2 C18.2 2.2 19.2 3.6 18.7 5.2Z" fill="#f2321f"/><text x="10.0" y="14.8" font-size="10.5" fill="#fff" text-anchor="middle" font-family="Liberation Sans" letter-spacing="-0.4">50</text></g>
<g transform="translate(306.0,338)"><path d="M1.3 5.2 H18.7 C19.7 7 20.0 9 19.5 11 C19.0 14 15.0 16 10.0 18 C5 16 1 14 0.5 11 C0 9 0.3 7 1.3 5.2Z" fill="#4a8cf3" stroke="#fff" stroke-width="0.8" stroke-opacity="0.7"/><path d="M1.3 5.2 C0.8 3.6 1.8 2.2 3.2 2 Q5.0 0.2 9.0 1.8 Q10.0 0 11.0 1.8 Q15.0 0.2 16.8 2 C18.2 2.2 19.2 3.6 18.7 5.2Z" fill="#f2321f"/><text x="10.0" y="14.8" font-size="10.5" fill="#fff" text-anchor="middle" font-family="Liberation Sans" letter-spacing="-0.4">15</text></g>
<g transform="translate(311.0,404)"><path d="M1.3 5.2 H18.7 C19.7 7 20.0 9 19.5 11 C19.0 14 15.0 16 10.0 18 C5 16 1 14 0.5 11 C0 9 0.3 7 1.3 5.2Z" fill="#4a8cf3" stroke="#fff" stroke-width="0.8" stroke-opacity="0.7"/><path d="M1.3 5.2 C0.8 3.6 1.8 2.2 3.2 2 Q5.0 0.2 9.0 1.8 Q10.0 0 11.0 1.8 Q15.0 0.2 16.8 2 C18.2 2.2 19.2 3.6 18.7 5.2Z" fill="#f2321f"/><text x="10.0" y="14.8" font-size="10.5" fill="#fff" text-anchor="middle" font-family="Liberation Sans" letter-spacing="-0.4">30</text></g>
<g transform="translate(545.0,394)"><path d="M1.3 5.2 H18.7 C19.7 7 20.0 9 19.5 11 C19.0 14 15.0 16 10.0 18 C5 16 1 14 0.5 11 C0 9 0.3 7 1.3 5.2Z" fill="#4a8cf3" stroke="#fff" stroke-width="0.8" stroke-opacity="0.7"/><path d="M1.3 5.2 C0.8 3.6 1.8 2.2 3.2 2 Q5.0 0.2 9.0 1.8 Q10.0 0 11.0 1.8 Q15.0 0.2 16.8 2 C18.2 2.2 19.2 3.6 18.7 5.2Z" fill="#f2321f"/><text x="10.0" y="14.8" font-size="10.5" fill="#fff" text-anchor="middle" font-family="Liberation Sans" letter-spacing="-0.4">45</text></g>
<g transform="translate(298.5,514)"><path d="M1.3 5.2 H23.7 C24.7 7 25.0 9 24.5 11 C24.0 14 20.0 16 12.5 18 C5 16 1 14 0.5 11 C0 9 0.3 7 1.3 5.2Z" fill="#4a8cf3" stroke="#fff" stroke-width="0.8" stroke-opacity="0.7"/><path d="M1.3 5.2 C0.8 3.6 1.8 2.2 3.2 2 Q6.2 0.2 11.5 1.8 Q12.5 0 13.5 1.8 Q18.8 0.2 21.8 2 C23.2 2.2 24.2 3.6 23.7 5.2Z" fill="#f2321f"/><text x="12.5" y="14.8" font-size="10" fill="#fff" text-anchor="middle" font-family="Liberation Sans" letter-spacing="-0.4">151</text></g>
<circle cx="367" cy="268" r="120" fill="#e57373" fill-opacity="0.36" stroke="#e06060" stroke-opacity="0.55" stroke-width="1"/>
<circle cx="367.5" cy="268.5" r="27.3" fill="#d62828"/>
<text x="367.5" y="281" font-size="28.5" font-weight="700" fill="#fff" text-anchor="middle" font-family="Liberation Sans" letter-spacing="-0.3">20</text>
</svg>
</div>

<!-- windows tray popup -->
<div class="a" style="left:1586px;top:880px;width:120px;height:115px;background:#474747;box-shadow:0 0 4px rgba(0,0,0,0.25)"></div>
<svg class="a" style="left:1586px;top:880px" width="120" height="115" viewBox="0 0 120 115">
  <g stroke="#fff" stroke-width="1.3" fill="none">
    <rect x="17" y="13" width="7" height="6" rx="1"/>
    <path d="M15.5 19H25.5V29.5A1.5 1.5 0 0 1 24 31H17A1.5 1.5 0 0 1 15.5 29.5Z"/>
  </g>
  <path d="M24 28L26 30.5L30 25.5" stroke="#ccc" stroke-width="1.1" fill="none"/>
  <path d="M60 11.5L67.5 14V21C67.5 26 64 29.5 60 31C56 29.5 52.5 26 52.5 21V14Z" fill="#fff" stroke="#111" stroke-width="1.2"/>
  <path d="M60 12V31M52.8 21H67.2" stroke="#111" stroke-width="1.2"/>
  <path d="M64 24L68.5 32H59.5Z" fill="#f7c325" stroke="#5a4a00" stroke-width="0.5"/>
  <rect x="92" y="12" width="16" height="16" rx="2" fill="#d9d9d9"/>
  <path d="M100 15C96 15 94 17.2 94 19.6C94 21.2 95 22.5 96.5 23.3L96 26L99 24.2C99.3 24.2 99.7 24.3 100 24.3C104 24.3 106 22 106 19.6C106 17.2 104 15 100 15Z" fill="#3e3e3e"/>
  <rect x="17" y="52" width="16" height="18" rx="1.5" fill="#8c3fc5"/>
  <rect x="14" y="56" width="10" height="10" rx="1" fill="#6c2aa5"/>
  <text x="19" y="64.5" font-size="8" font-weight="700" fill="#fff" text-anchor="middle" font-family="Liberation Sans">N</text>
  <path d="M51 67L56 51M54.5 68L59.5 52M58 68.5L63 52.5M61.5 69L66.5 53" stroke-width="1.6" fill="none" stroke="#e06a3a"/>
  <path d="M54.5 68L59.5 52" stroke="#5db0e0" stroke-width="1.6"/>
  <path d="M61.5 69L66.5 53" stroke="#7ac06a" stroke-width="1.6"/>
  <rect x="92" y="52" width="16" height="16" rx="2" fill="#fff" stroke="#111" stroke-width="1.5"/>
  <text x="100" y="64.5" font-size="11" font-weight="700" fill="#111" text-anchor="middle" font-family="Liberation Serif">N</text>
  <g stroke="#fff" stroke-width="1.3" fill="none">
    <rect x="15" y="94" width="11" height="10" rx="2.5"/>
    <path d="M26 97L30 95V103L26 101"/>
    <path d="M17 91.5C19 90.5 22 90.5 24 91.5M17 106.5C19 107.5 22 107.5 24 106.5"/>
  </g>
  <rect x="51.5" y="90.5" width="17" height="17" rx="2.5" fill="#e4641c"/>
  <path d="M55 103.5H65M56 100.5L63 95M57 98L61 94.5" stroke="#fff" stroke-width="1.3" fill="none"/>
  <circle cx="100" cy="99.5" r="8.5" fill="#1677e8"/>
  <circle cx="100" cy="99.5" r="5" fill="none" stroke="#fff" stroke-width="1.3"/>
  <path d="M100 99.5L103.5 96" stroke="#fff" stroke-width="1.3"/>
</svg>
<div class="a" style="left:1507px;top:903px;font-size:21px;color:rgba(149,149,149,0.66);letter-spacing:0px">Windows 정품 인증</div>
<div class="a" style="left:1507px;top:929px;font-size:16px;color:rgba(149,149,149,0.66);letter-spacing:-0.45px">[설정]으로 이동하여 Windows를 정품 인증합니다.</div>

</body>
</html>
